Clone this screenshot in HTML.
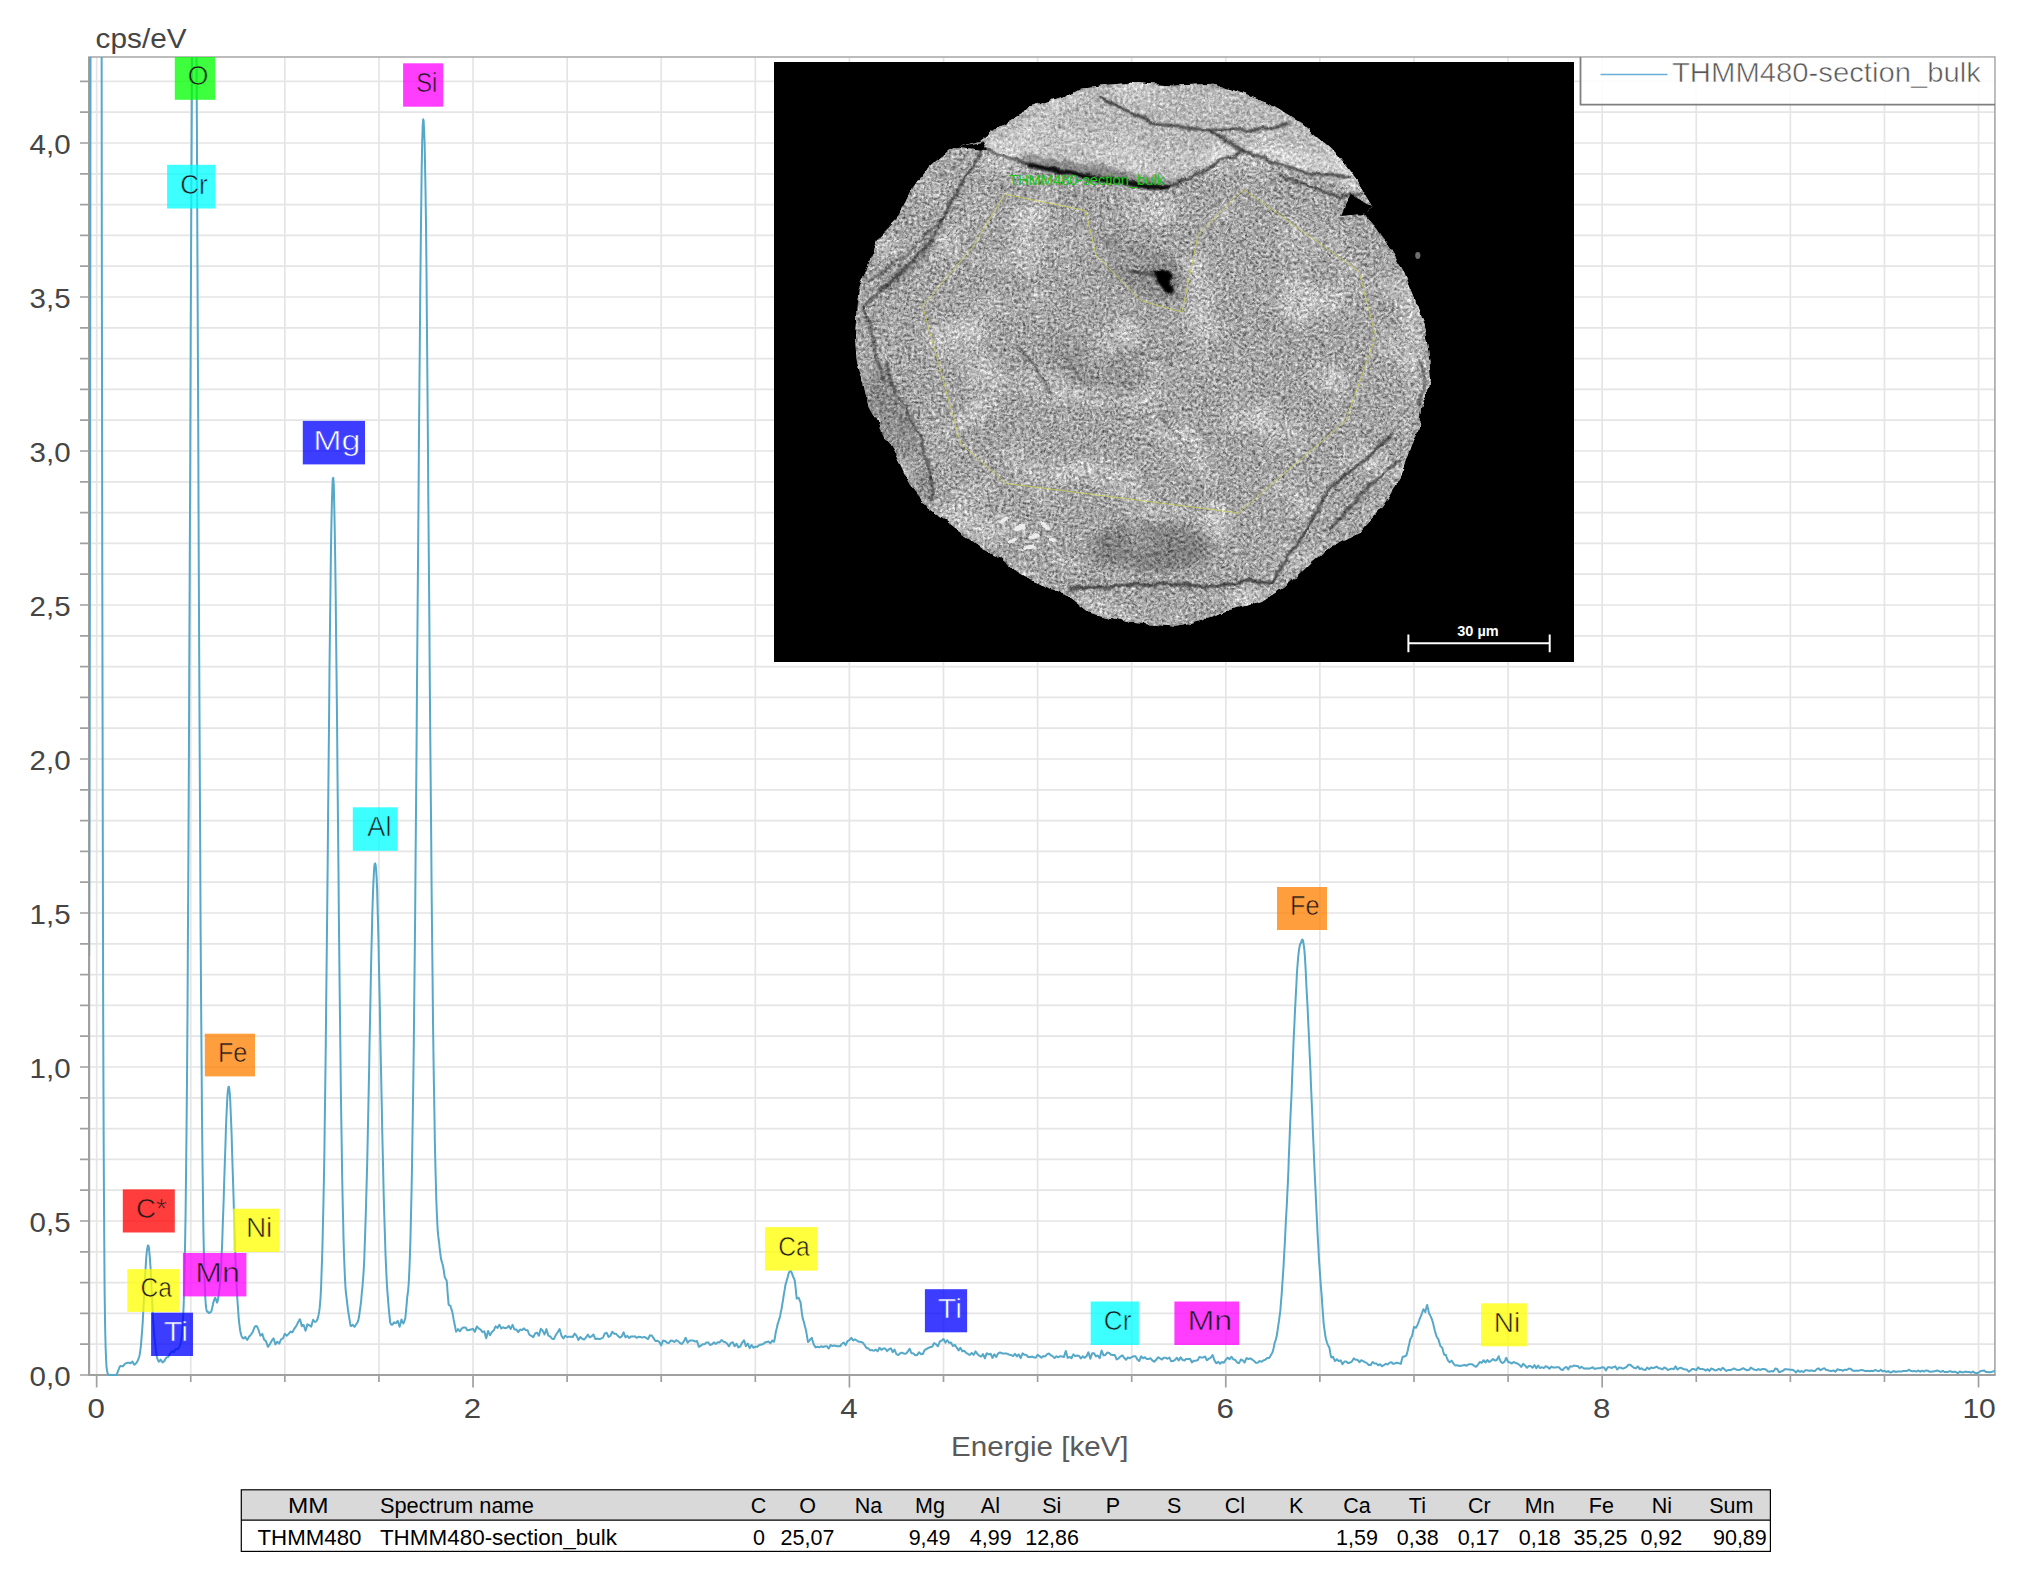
<!DOCTYPE html>
<html lang="de"><head><meta charset="utf-8"><title>EDS Spektrum THMM480-section_bulk</title>
<style>html,body{margin:0;padding:0;background:#fff;}body{width:2026px;height:1580px;overflow:hidden;}svg{display:block;}text{font-family:"Liberation Sans", sans-serif;}</style></head><body>
<svg width="2026" height="1580" viewBox="0 0 2026 1580">
<rect x="0" y="0" width="2026" height="1580" fill="#ffffff"/>
<defs>
<clipPath id="plotclip"><rect x="89.1" y="57.0" width="1905.8" height="1319.0"/></clipPath>
</defs>
<path d="M89.1 1344.20H1994.9M89.1 1313.40H1994.9M89.1 1282.60H1994.9M89.1 1251.80H1994.9M89.1 1221.00H1994.9M89.1 1190.20H1994.9M89.1 1159.40H1994.9M89.1 1128.60H1994.9M89.1 1097.80H1994.9M89.1 1067.00H1994.9M89.1 1036.20H1994.9M89.1 1005.40H1994.9M89.1 974.60H1994.9M89.1 943.80H1994.9M89.1 913.00H1994.9M89.1 882.20H1994.9M89.1 851.40H1994.9M89.1 820.60H1994.9M89.1 789.80H1994.9M89.1 759.00H1994.9M89.1 728.20H1994.9M89.1 697.40H1994.9M89.1 666.60H1994.9M89.1 635.80H1994.9M89.1 605.00H1994.9M89.1 574.20H1994.9M89.1 543.40H1994.9M89.1 512.60H1994.9M89.1 481.80H1994.9M89.1 451.00H1994.9M89.1 420.20H1994.9M89.1 389.40H1994.9M89.1 358.60H1994.9M89.1 327.80H1994.9M89.1 297.00H1994.9M89.1 266.20H1994.9M89.1 235.40H1994.9M89.1 204.60H1994.9M89.1 173.80H1994.9M89.1 143.00H1994.9M89.1 112.20H1994.9M89.1 81.40H1994.9M96.65 57.0V1375.0M190.75 57.0V1375.0M284.84 57.0V1375.0M378.93 57.0V1375.0M473.03 57.0V1375.0M567.12 57.0V1375.0M661.22 57.0V1375.0M755.31 57.0V1375.0M849.41 57.0V1375.0M943.50 57.0V1375.0M1037.60 57.0V1375.0M1131.70 57.0V1375.0M1225.79 57.0V1375.0M1319.88 57.0V1375.0M1413.98 57.0V1375.0M1508.08 57.0V1375.0M1602.17 57.0V1375.0M1696.27 57.0V1375.0M1790.36 57.0V1375.0M1884.46 57.0V1375.0M1978.55 57.0V1375.0" stroke="#e5e5e5" stroke-width="1.7" fill="none"/>
<path d="M88.1 57.0H1994.9V1375.0" stroke="#a6a6a6" stroke-width="1.6" fill="none"/>
<path d="M89.1 57.0V1375.0H1995.7" stroke="#a0a0a0" stroke-width="2.2" fill="none"/>
<path d="M80.0 1375.00H89.1M80.0 1344.20H89.1M80.0 1313.40H89.1M80.0 1282.60H89.1M80.0 1251.80H89.1M80.0 1221.00H89.1M80.0 1190.20H89.1M80.0 1159.40H89.1M80.0 1128.60H89.1M80.0 1097.80H89.1M80.0 1067.00H89.1M80.0 1036.20H89.1M80.0 1005.40H89.1M80.0 974.60H89.1M80.0 943.80H89.1M80.0 913.00H89.1M80.0 882.20H89.1M80.0 851.40H89.1M80.0 820.60H89.1M80.0 789.80H89.1M80.0 759.00H89.1M80.0 728.20H89.1M80.0 697.40H89.1M80.0 666.60H89.1M80.0 635.80H89.1M80.0 605.00H89.1M80.0 574.20H89.1M80.0 543.40H89.1M80.0 512.60H89.1M80.0 481.80H89.1M80.0 451.00H89.1M80.0 420.20H89.1M80.0 389.40H89.1M80.0 358.60H89.1M80.0 327.80H89.1M80.0 297.00H89.1M80.0 266.20H89.1M80.0 235.40H89.1M80.0 204.60H89.1M80.0 173.80H89.1M80.0 143.00H89.1M80.0 112.20H89.1M80.0 81.40H89.1M96.65 1375.0v12.5M190.75 1375.0v7.0M284.84 1375.0v7.0M378.93 1375.0v7.0M473.03 1375.0v12.5M567.12 1375.0v7.0M661.22 1375.0v7.0M755.31 1375.0v7.0M849.41 1375.0v12.5M943.50 1375.0v7.0M1037.60 1375.0v7.0M1131.70 1375.0v7.0M1225.79 1375.0v12.5M1319.88 1375.0v7.0M1413.98 1375.0v7.0M1508.08 1375.0v7.0M1602.17 1375.0v12.5M1696.27 1375.0v7.0M1790.36 1375.0v7.0M1884.46 1375.0v7.0M1978.55 1375.0v12.5" stroke="#a0a0a0" stroke-width="1.7" fill="none"/>
<g fill="#454545" font-size="28.5px">
<text x="70.6" y="1385.6" text-anchor="end" textLength="41" lengthAdjust="spacingAndGlyphs">0,0</text>
<text x="70.6" y="1231.6" text-anchor="end" textLength="41" lengthAdjust="spacingAndGlyphs">0,5</text>
<text x="70.6" y="1077.6" text-anchor="end" textLength="41" lengthAdjust="spacingAndGlyphs">1,0</text>
<text x="70.6" y="923.6" text-anchor="end" textLength="41" lengthAdjust="spacingAndGlyphs">1,5</text>
<text x="70.6" y="769.6" text-anchor="end" textLength="41" lengthAdjust="spacingAndGlyphs">2,0</text>
<text x="70.6" y="615.6" text-anchor="end" textLength="41" lengthAdjust="spacingAndGlyphs">2,5</text>
<text x="70.6" y="461.6" text-anchor="end" textLength="41" lengthAdjust="spacingAndGlyphs">3,0</text>
<text x="70.6" y="307.6" text-anchor="end" textLength="41" lengthAdjust="spacingAndGlyphs">3,5</text>
<text x="70.6" y="153.6" text-anchor="end" textLength="41" lengthAdjust="spacingAndGlyphs">4,0</text>
<text x="96.2" y="1417.6" text-anchor="middle" textLength="17.4" lengthAdjust="spacingAndGlyphs">0</text>
<text x="472.5" y="1417.6" text-anchor="middle" textLength="17.4" lengthAdjust="spacingAndGlyphs">2</text>
<text x="848.9" y="1417.6" text-anchor="middle" textLength="17.4" lengthAdjust="spacingAndGlyphs">4</text>
<text x="1225.3" y="1417.6" text-anchor="middle" textLength="17.4" lengthAdjust="spacingAndGlyphs">6</text>
<text x="1601.7" y="1417.6" text-anchor="middle" textLength="17.4" lengthAdjust="spacingAndGlyphs">8</text>
<text x="1979.1" y="1417.6" text-anchor="middle" textLength="33.4" lengthAdjust="spacingAndGlyphs">10</text>
<text x="95.6" y="47.6" textLength="91" lengthAdjust="spacingAndGlyphs">cps/eV</text>
<text x="1039.8" y="1455.6" text-anchor="middle" textLength="177.5" lengthAdjust="spacingAndGlyphs" fill="#5a5a5a">Energie [keV]</text>
</g>
<g clip-path="url(#plotclip)"><path d="M89.1 955.5 L89.6 744.1 L90.1 452.9 L90.5 65.3 L91.0 -400.0 L91.5 -400.0 L91.9 -400.0 L92.4 -400.0 L92.9 -400.0 L93.4 -400.0 L93.8 -400.0 L94.3 -400.0 L94.8 -400.0 L95.2 -400.0 L95.7 -400.0 L96.2 -400.0 L96.7 -400.0 L97.1 -400.0 L97.6 -400.0 L98.1 -400.0 L98.5 -400.0 L99.0 -400.0 L99.5 -400.0 L99.9 -400.0 L100.4 -400.0 L100.9 -400.0 L101.4 -219.7 L101.8 232.9 L102.3 580.1 L102.8 837.3 L103.2 1021.5 L103.7 1149.1 L104.2 1234.8 L104.6 1290.4 L105.1 1325.4 L105.6 1346.7 L106.1 1359.3 L106.5 1366.6 L107.0 1370.6 L107.5 1372.8 L107.9 1373.9 L108.4 1374.5 L108.9 1374.8 L109.4 1374.9 L109.8 1375.0 L110.3 1375.0 L110.8 1375.0 L111.2 1375.0 L111.7 1375.0 L112.2 1375.0 L112.6 1375.0 L113.1 1375.0 L113.6 1375.0 L114.1 1375.0 L114.5 1375.0 L115.0 1375.0 L115.5 1375.0 L115.9 1375.0 L116.4 1375.0 L116.9 1373.8 L117.4 1372.7 L117.8 1371.5 L118.3 1370.3 L118.8 1369.1 L119.2 1367.9 L119.7 1366.9 L120.2 1366.0 L120.6 1366.1 L121.1 1366.1 L121.6 1366.2 L122.1 1366.2 L122.5 1366.3 L123.0 1366.3 L123.5 1365.7 L123.9 1365.1 L124.4 1364.5 L124.9 1363.9 L125.3 1363.7 L125.8 1363.4 L126.3 1363.1 L126.8 1362.9 L127.2 1362.8 L127.7 1362.8 L128.2 1362.7 L128.6 1362.7 L129.1 1362.8 L129.6 1363.0 L130.1 1363.1 L130.5 1363.2 L131.0 1362.8 L131.5 1362.4 L131.9 1362.0 L132.4 1361.6 L132.9 1362.4 L133.3 1363.2 L133.8 1363.9 L134.3 1364.7 L134.8 1364.4 L135.2 1364.0 L135.7 1363.6 L136.2 1363.1 L136.6 1362.5 L137.1 1361.8 L137.6 1360.9 L138.1 1359.7 L138.5 1358.7 L139.0 1357.3 L139.5 1355.5 L139.9 1353.2 L140.4 1349.8 L140.9 1345.6 L141.3 1340.7 L141.8 1334.8 L142.3 1328.2 L142.8 1320.8 L143.2 1312.5 L143.7 1303.5 L144.2 1294.7 L144.6 1285.7 L145.1 1276.8 L145.6 1268.4 L146.0 1261.1 L146.5 1254.9 L147.0 1250.2 L147.5 1247.3 L147.9 1245.4 L148.4 1245.6 L148.9 1247.7 L149.3 1251.7 L149.8 1257.2 L150.3 1264.1 L150.8 1272.1 L151.2 1280.7 L151.7 1290.8 L152.2 1300.8 L152.6 1310.6 L153.1 1319.8 L153.6 1326.7 L154.0 1332.7 L154.5 1337.8 L155.0 1342.0 L155.5 1346.7 L155.9 1350.7 L156.4 1353.9 L156.9 1356.5 L157.3 1358.3 L157.8 1359.7 L158.3 1360.8 L158.8 1361.6 L159.2 1361.3 L159.7 1360.8 L160.2 1360.3 L160.6 1359.6 L161.1 1360.4 L161.6 1361.1 L162.0 1361.8 L162.5 1362.4 L163.0 1362.1 L163.5 1361.7 L163.9 1361.3 L164.4 1360.9 L164.9 1360.1 L165.3 1359.2 L165.8 1358.4 L166.3 1357.6 L166.8 1357.4 L167.2 1357.3 L167.7 1357.1 L168.2 1356.9 L168.6 1356.2 L169.1 1355.4 L169.6 1354.6 L170.0 1353.8 L170.5 1353.2 L171.0 1352.5 L171.5 1351.9 L171.9 1351.2 L172.4 1351.4 L172.9 1351.7 L173.3 1351.9 L173.8 1352.1 L174.3 1351.3 L174.7 1350.5 L175.2 1349.8 L175.7 1349.0 L176.2 1349.1 L176.6 1349.1 L177.1 1349.2 L177.6 1349.2 L178.0 1348.8 L178.5 1348.3 L179.0 1347.7 L179.5 1347.0 L179.9 1345.8 L180.4 1344.3 L180.9 1342.3 L181.3 1339.7 L181.8 1336.1 L182.3 1331.3 L182.7 1324.8 L183.2 1316.1 L183.7 1303.8 L184.2 1288.0 L184.6 1267.7 L185.1 1242.2 L185.6 1213.3 L186.0 1177.2 L186.5 1133.0 L187.0 1079.8 L187.5 1014.2 L187.9 939.0 L188.4 854.4 L188.9 761.0 L189.3 660.7 L189.8 554.8 L190.3 445.6 L190.7 336.0 L191.2 228.8 L191.7 128.1 L192.2 37.3 L192.6 -40.1 L193.1 -100.6 L193.6 -142.3 L194.0 -163.3 L194.5 -162.9 L195.0 -142.0 L195.4 -100.6 L195.9 -40.6 L196.4 35.5 L196.9 126.6 L197.3 227.2 L197.8 333.8 L198.3 442.8 L198.7 551.7 L199.2 657.0 L199.7 756.4 L200.2 848.2 L200.6 929.7 L201.1 1001.7 L201.6 1064.1 L202.0 1117.2 L202.5 1162.6 L203.0 1200.0 L203.4 1230.2 L203.9 1254.3 L204.4 1272.7 L204.9 1286.7 L205.3 1297.3 L205.8 1305.2 L206.3 1308.9 L206.7 1310.9 L207.2 1311.7 L207.7 1311.5 L208.2 1312.5 L208.6 1313.0 L209.1 1313.0 L209.6 1312.6 L210.0 1312.6 L210.5 1312.4 L211.0 1311.8 L211.4 1311.0 L211.9 1309.1 L212.4 1307.0 L212.9 1304.8 L213.3 1302.7 L213.8 1301.1 L214.3 1299.7 L214.7 1298.6 L215.2 1297.8 L215.7 1298.9 L216.2 1300.2 L216.6 1301.5 L217.1 1302.7 L217.6 1301.2 L218.0 1299.1 L218.5 1296.3 L219.0 1292.6 L219.4 1289.3 L219.9 1284.7 L220.4 1278.7 L220.9 1271.4 L221.3 1262.2 L221.8 1251.6 L222.3 1239.6 L222.7 1226.5 L223.2 1213.1 L223.7 1198.9 L224.1 1184.3 L224.6 1169.5 L225.1 1154.5 L225.6 1140.1 L226.0 1126.8 L226.5 1114.9 L227.0 1104.5 L227.4 1096.2 L227.9 1090.3 L228.4 1087.1 L228.9 1086.7 L229.3 1089.2 L229.8 1094.2 L230.3 1101.8 L230.7 1111.8 L231.2 1123.8 L231.7 1137.4 L232.1 1152.1 L232.6 1167.4 L233.1 1183.1 L233.6 1198.8 L234.0 1214.3 L234.5 1229.8 L235.0 1244.5 L235.4 1258.1 L235.9 1270.6 L236.4 1281.2 L236.9 1290.5 L237.3 1298.5 L237.8 1305.5 L238.3 1312.3 L238.7 1318.1 L239.2 1323.0 L239.7 1327.2 L240.1 1330.2 L240.6 1332.6 L241.1 1334.5 L241.6 1336.1 L242.0 1337.0 L242.5 1337.7 L243.0 1338.2 L243.4 1338.5 L243.9 1338.3 L244.4 1337.9 L244.8 1337.5 L245.3 1336.9 L245.8 1337.8 L246.3 1338.6 L246.7 1339.3 L247.2 1339.9 L247.7 1339.2 L248.1 1338.4 L248.6 1337.5 L249.1 1336.5 L249.6 1336.1 L250.0 1335.7 L250.5 1335.2 L251.0 1334.5 L251.4 1333.9 L251.9 1333.2 L252.4 1332.5 L252.8 1331.8 L253.3 1330.4 L253.8 1329.1 L254.3 1327.9 L254.7 1327.0 L255.2 1326.4 L255.7 1326.1 L256.1 1325.9 L256.6 1326.1 L257.1 1326.7 L257.6 1327.6 L258.0 1328.6 L258.5 1329.7 L259.0 1331.2 L259.4 1332.7 L259.9 1334.2 L260.4 1335.6 L260.8 1335.3 L261.3 1334.9 L261.8 1334.4 L262.3 1333.8 L262.7 1335.4 L263.2 1336.8 L263.7 1338.2 L264.1 1339.5 L264.6 1340.1 L265.1 1340.5 L265.6 1340.9 L266.0 1341.3 L266.5 1342.7 L267.0 1344.1 L267.4 1345.5 L267.9 1346.8 L268.4 1346.2 L268.8 1345.6 L269.3 1345.0 L269.8 1344.4 L270.3 1343.5 L270.7 1342.6 L271.2 1341.7 L271.7 1340.8 L272.1 1340.2 L272.6 1339.5 L273.1 1338.9 L273.5 1338.3 L274.0 1339.8 L274.5 1341.4 L275.0 1342.9 L275.4 1344.4 L275.9 1343.8 L276.4 1343.1 L276.8 1342.4 L277.3 1341.7 L277.8 1342.1 L278.3 1342.6 L278.7 1343.1 L279.2 1343.6 L279.7 1342.5 L280.1 1341.4 L280.6 1340.4 L281.1 1339.3 L281.5 1339.1 L282.0 1338.9 L282.5 1338.6 L283.0 1338.4 L283.4 1337.3 L283.9 1336.2 L284.4 1335.0 L284.8 1333.9 L285.3 1334.4 L285.8 1334.8 L286.3 1335.3 L286.7 1335.8 L287.2 1335.3 L287.7 1334.8 L288.1 1334.4 L288.6 1333.9 L289.1 1333.3 L289.5 1332.7 L290.0 1332.2 L290.5 1331.6 L291.0 1331.8 L291.4 1332.0 L291.9 1332.2 L292.4 1332.3 L292.8 1331.5 L293.3 1330.6 L293.8 1329.6 L294.2 1328.7 L294.7 1328.1 L295.2 1327.5 L295.7 1326.8 L296.1 1326.0 L296.6 1325.3 L297.1 1324.4 L297.5 1323.4 L298.0 1322.4 L298.5 1321.5 L299.0 1320.7 L299.4 1319.9 L299.9 1319.2 L300.4 1320.6 L300.8 1322.2 L301.3 1324.1 L301.8 1326.2 L302.2 1325.6 L302.7 1325.2 L303.2 1325.0 L303.7 1324.9 L304.1 1326.4 L304.6 1327.9 L305.1 1329.3 L305.5 1330.7 L306.0 1329.3 L306.5 1327.7 L307.0 1326.1 L307.4 1324.3 L307.9 1324.7 L308.4 1324.9 L308.8 1325.1 L309.3 1325.2 L309.8 1325.6 L310.2 1325.9 L310.7 1326.3 L311.2 1326.6 L311.7 1324.9 L312.1 1323.2 L312.6 1321.5 L313.1 1319.8 L313.5 1320.4 L314.0 1321.0 L314.5 1321.5 L315.0 1321.9 L315.4 1321.8 L315.9 1321.6 L316.4 1321.1 L316.8 1320.5 L317.3 1319.6 L317.8 1318.4 L318.2 1316.6 L318.7 1314.2 L319.2 1311.4 L319.7 1307.7 L320.1 1302.8 L320.6 1296.5 L321.1 1286.6 L321.5 1274.8 L322.0 1260.8 L322.5 1244.2 L322.9 1225.9 L323.4 1204.5 L323.9 1180.0 L324.4 1152.0 L324.8 1119.2 L325.3 1082.9 L325.8 1043.2 L326.2 1000.4 L326.7 956.4 L327.2 910.1 L327.7 862.1 L328.1 813.1 L328.6 764.1 L329.1 715.9 L329.5 669.6 L330.0 626.1 L330.5 587.0 L330.9 552.8 L331.4 524.4 L331.9 502.6 L332.4 486.7 L332.8 478.4 L333.3 477.8 L333.8 485.1 L334.2 502.9 L334.7 527.8 L335.2 559.3 L335.7 596.5 L336.1 636.2 L336.6 679.8 L337.1 726.3 L337.5 774.6 L338.0 823.6 L338.5 872.4 L338.9 920.2 L339.4 966.3 L339.9 1009.4 L340.4 1049.6 L340.8 1086.7 L341.3 1120.4 L341.8 1151.3 L342.2 1178.7 L342.7 1202.7 L343.2 1223.5 L343.6 1241.6 L344.1 1257.0 L344.6 1269.9 L345.1 1280.6 L345.5 1287.8 L346.0 1293.3 L346.5 1297.4 L346.9 1300.4 L347.4 1305.1 L347.9 1309.0 L348.4 1312.3 L348.8 1315.0 L349.3 1318.2 L349.8 1321.1 L350.2 1323.7 L350.7 1326.1 L351.2 1325.9 L351.6 1325.6 L352.1 1325.2 L352.6 1324.8 L353.1 1325.3 L353.5 1325.9 L354.0 1326.4 L354.5 1326.9 L354.9 1326.2 L355.4 1325.5 L355.9 1324.8 L356.4 1324.0 L356.8 1323.4 L357.3 1322.6 L357.8 1321.7 L358.2 1320.6 L358.7 1318.2 L359.2 1315.5 L359.6 1312.4 L360.1 1308.9 L360.6 1305.4 L361.1 1301.3 L361.5 1296.5 L362.0 1290.9 L362.5 1286.6 L362.9 1281.2 L363.4 1274.7 L363.9 1266.9 L364.4 1255.8 L364.8 1243.4 L365.3 1229.4 L365.8 1213.9 L366.2 1198.5 L366.7 1181.5 L367.2 1163.1 L367.6 1143.4 L368.1 1120.1 L368.6 1095.8 L369.1 1070.8 L369.5 1045.4 L370.0 1021.1 L370.5 997.1 L370.9 973.8 L371.4 951.6 L371.9 931.8 L372.3 913.9 L372.8 898.3 L373.3 885.4 L373.8 875.0 L374.2 867.8 L374.7 863.9 L375.2 863.4 L375.6 864.8 L376.1 869.5 L376.6 877.6 L377.1 888.7 L377.5 904.2 L378.0 922.1 L378.5 942.2 L378.9 964.1 L379.4 986.9 L379.9 1010.6 L380.3 1034.9 L380.8 1059.4 L381.3 1083.3 L381.8 1106.7 L382.2 1129.4 L382.7 1150.9 L383.2 1171.8 L383.6 1191.3 L384.1 1209.3 L384.6 1225.8 L385.1 1240.5 L385.5 1253.8 L386.0 1265.6 L386.5 1276.0 L386.9 1284.4 L387.4 1291.6 L387.9 1297.7 L388.3 1302.8 L388.8 1308.8 L389.3 1314.0 L389.8 1318.6 L390.2 1322.6 L390.7 1323.7 L391.2 1324.4 L391.6 1324.8 L392.1 1324.8 L392.6 1324.5 L393.0 1323.9 L393.5 1323.2 L394.0 1322.4 L394.5 1322.7 L394.9 1322.9 L395.4 1323.0 L395.9 1323.1 L396.3 1322.6 L396.8 1322.0 L397.3 1321.4 L397.8 1320.9 L398.2 1322.4 L398.7 1323.9 L399.2 1325.4 L399.6 1326.8 L400.1 1325.0 L400.6 1323.2 L401.0 1321.3 L401.5 1319.4 L402.0 1320.6 L402.5 1321.6 L402.9 1322.6 L403.4 1323.4 L403.9 1322.4 L404.3 1321.2 L404.8 1319.8 L405.3 1317.9 L405.8 1313.7 L406.2 1309.0 L406.7 1303.6 L407.2 1297.4 L407.6 1294.5 L408.1 1290.4 L408.6 1285.0 L409.0 1278.0 L409.5 1266.6 L410.0 1253.1 L410.5 1237.3 L410.9 1219.0 L411.4 1197.7 L411.9 1173.4 L412.3 1145.7 L412.8 1114.6 L413.3 1081.2 L413.8 1044.2 L414.2 1003.4 L414.7 959.0 L415.2 909.2 L415.6 856.2 L416.1 800.3 L416.6 741.9 L417.0 683.2 L417.5 623.2 L418.0 562.8 L418.5 502.8 L418.9 444.4 L419.4 388.3 L419.9 335.5 L420.3 286.8 L420.8 240.8 L421.3 200.7 L421.7 167.3 L422.2 141.2 L422.7 126.1 L423.2 119.2 L423.6 120.7 L424.1 130.5 L424.6 142.6 L425.0 162.6 L425.5 189.8 L426.0 223.8 L426.5 271.1 L426.9 323.5 L427.4 380.0 L427.9 439.8 L428.3 496.5 L428.8 554.5 L429.3 612.8 L429.7 670.5 L430.2 728.6 L430.7 784.6 L431.2 838.0 L431.6 888.3 L432.1 936.3 L432.6 980.5 L433.0 1020.9 L433.5 1057.4 L434.0 1090.1 L434.5 1118.9 L434.9 1144.2 L435.4 1166.1 L435.9 1184.3 L436.3 1199.6 L436.8 1212.3 L437.3 1222.8 L437.7 1230.1 L438.2 1235.7 L438.7 1240.0 L439.2 1243.2 L439.6 1247.9 L440.1 1251.9 L440.6 1255.6 L441.0 1258.9 L441.5 1260.6 L442.0 1262.2 L442.4 1263.8 L442.9 1265.6 L443.4 1268.3 L443.9 1271.1 L444.3 1274.1 L444.8 1277.3 L445.3 1278.0 L445.7 1278.9 L446.2 1279.8 L446.7 1280.7 L447.2 1286.7 L447.6 1292.7 L448.1 1298.6 L448.6 1304.4 L449.0 1305.0 L449.5 1305.4 L450.0 1305.6 L450.4 1305.7 L450.9 1307.5 L451.4 1309.1 L451.9 1310.6 L452.3 1311.8 L452.8 1314.7 L453.3 1317.4 L453.7 1319.9 L454.2 1322.3 L454.7 1324.8 L455.2 1327.2 L455.6 1329.5 L456.1 1331.7 L456.6 1331.1 L457.0 1330.5 L457.5 1329.8 L458.0 1329.0 L458.4 1329.6 L458.9 1330.2 L459.4 1330.8 L459.9 1331.3 L460.3 1330.6 L460.8 1329.9 L461.3 1329.2 L461.7 1328.5 L462.2 1328.2 L462.7 1328.0 L463.2 1327.7 L463.6 1327.4 L464.1 1327.4 L464.6 1327.4 L465.0 1327.4 L465.5 1327.4 L466.0 1328.1 L466.4 1328.9 L466.9 1329.6 L467.4 1330.3 L467.9 1330.2 L468.3 1330.1 L468.8 1330.1 L469.3 1330.0 L469.7 1329.8 L470.2 1329.7 L470.7 1329.5 L471.1 1329.4 L471.6 1329.3 L472.1 1329.2 L472.6 1329.1 L473.0 1328.9 L473.5 1329.7 L474.0 1330.4 L474.4 1331.1 L474.9 1331.8 L475.4 1330.5 L475.9 1329.2 L476.3 1327.8 L476.8 1326.5 L477.3 1327.0 L477.7 1327.5 L478.2 1327.9 L478.7 1328.4 L479.1 1328.7 L479.6 1329.0 L480.1 1329.3 L480.6 1329.6 L481.0 1330.2 L481.5 1330.8 L482.0 1331.4 L482.4 1332.1 L482.9 1331.9 L483.4 1331.7 L483.9 1331.6 L484.3 1331.4 L484.8 1333.1 L485.3 1334.9 L485.7 1336.6 L486.2 1338.3 L486.7 1336.5 L487.1 1334.6 L487.6 1332.8 L488.1 1330.9 L488.6 1332.0 L489.0 1333.1 L489.5 1334.2 L490.0 1335.3 L490.4 1334.5 L490.9 1333.7 L491.4 1332.9 L491.8 1332.0 L492.3 1331.6 L492.8 1331.2 L493.3 1330.8 L493.7 1330.5 L494.2 1329.4 L494.7 1328.4 L495.1 1327.4 L495.6 1326.4 L496.1 1326.8 L496.6 1327.2 L497.0 1327.5 L497.5 1327.9 L498.0 1327.1 L498.4 1326.3 L498.9 1325.5 L499.4 1324.7 L499.8 1325.7 L500.3 1326.6 L500.8 1327.5 L501.3 1328.4 L501.7 1328.1 L502.2 1327.9 L502.7 1327.6 L503.1 1327.3 L503.6 1327.5 L504.1 1327.8 L504.6 1328.0 L505.0 1328.2 L505.5 1328.1 L506.0 1328.0 L506.4 1327.9 L506.9 1327.7 L507.4 1327.3 L507.8 1326.8 L508.3 1326.4 L508.8 1325.9 L509.3 1326.7 L509.7 1327.4 L510.2 1328.1 L510.7 1328.9 L511.1 1327.9 L511.6 1326.9 L512.1 1325.9 L512.5 1324.9 L513.0 1326.0 L513.5 1327.2 L514.0 1328.3 L514.4 1329.4 L514.9 1329.4 L515.4 1329.4 L515.8 1329.4 L516.3 1329.4 L516.8 1330.1 L517.3 1330.8 L517.7 1331.5 L518.2 1332.2 L518.7 1331.5 L519.1 1330.9 L519.6 1330.2 L520.1 1329.5 L520.5 1329.6 L521.0 1329.8 L521.5 1330.0 L522.0 1330.1 L522.4 1329.7 L522.9 1329.3 L523.4 1328.8 L523.8 1328.4 L524.3 1328.8 L524.8 1329.3 L525.3 1329.7 L525.7 1330.1 L526.2 1330.2 L526.7 1330.2 L527.1 1330.2 L527.6 1330.3 L528.1 1331.5 L528.5 1332.6 L529.0 1333.8 L529.5 1334.9 L530.0 1335.1 L530.4 1335.4 L530.9 1335.6 L531.4 1335.8 L531.8 1336.1 L532.3 1336.5 L532.8 1336.9 L533.3 1337.2 L533.7 1336.3 L534.2 1335.3 L534.7 1334.4 L535.1 1333.4 L535.6 1333.2 L536.1 1333.1 L536.5 1332.9 L537.0 1332.7 L537.5 1333.4 L538.0 1334.2 L538.4 1334.9 L538.9 1335.7 L539.4 1333.9 L539.8 1332.2 L540.3 1330.5 L540.8 1328.8 L541.2 1329.3 L541.7 1329.8 L542.2 1330.3 L542.7 1330.8 L543.1 1331.7 L543.6 1332.6 L544.1 1333.6 L544.5 1334.5 L545.0 1333.2 L545.5 1331.8 L546.0 1330.5 L546.4 1329.1 L546.9 1330.7 L547.4 1332.3 L547.8 1333.9 L548.3 1335.5 L548.8 1335.7 L549.2 1336.0 L549.7 1336.3 L550.2 1336.5 L550.7 1337.0 L551.1 1337.6 L551.6 1338.1 L552.1 1338.7 L552.5 1338.8 L553.0 1338.9 L553.5 1338.9 L554.0 1339.0 L554.4 1338.0 L554.9 1336.9 L555.4 1335.9 L555.8 1334.8 L556.3 1334.2 L556.8 1333.5 L557.2 1332.9 L557.7 1332.3 L558.2 1331.4 L558.7 1330.6 L559.1 1329.8 L559.6 1329.0 L560.1 1330.7 L560.5 1332.3 L561.0 1334.0 L561.5 1335.7 L561.9 1336.4 L562.4 1337.0 L562.9 1337.7 L563.4 1338.4 L563.8 1337.7 L564.3 1337.0 L564.8 1336.3 L565.2 1335.7 L565.7 1336.0 L566.2 1336.3 L566.7 1336.7 L567.1 1337.0 L567.6 1336.9 L568.1 1336.9 L568.5 1336.8 L569.0 1336.7 L569.5 1336.7 L569.9 1336.7 L570.4 1336.7 L570.9 1336.7 L571.4 1336.8 L571.8 1336.8 L572.3 1336.9 L572.8 1337.0 L573.2 1336.1 L573.7 1335.2 L574.2 1334.4 L574.7 1333.5 L575.1 1334.1 L575.6 1334.7 L576.1 1335.3 L576.5 1335.9 L577.0 1336.9 L577.5 1337.9 L577.9 1338.9 L578.4 1340.0 L578.9 1339.2 L579.4 1338.5 L579.8 1337.7 L580.3 1337.0 L580.8 1337.4 L581.2 1337.8 L581.7 1338.3 L582.2 1338.7 L582.7 1338.9 L583.1 1339.1 L583.6 1339.4 L584.1 1339.6 L584.5 1339.1 L585.0 1338.6 L585.5 1338.0 L585.9 1337.5 L586.4 1336.8 L586.9 1336.1 L587.4 1335.3 L587.8 1334.6 L588.3 1335.3 L588.8 1336.0 L589.2 1336.6 L589.7 1337.3 L590.2 1337.1 L590.6 1336.8 L591.1 1336.6 L591.6 1336.3 L592.1 1335.9 L592.5 1335.4 L593.0 1334.9 L593.5 1334.4 L593.9 1335.6 L594.4 1336.8 L594.9 1338.0 L595.4 1339.1 L595.8 1339.0 L596.3 1338.9 L596.8 1338.7 L597.2 1338.6 L597.7 1338.7 L598.2 1338.9 L598.6 1339.0 L599.1 1339.1 L599.6 1339.0 L600.1 1338.9 L600.5 1338.8 L601.0 1338.6 L601.5 1338.4 L601.9 1338.2 L602.4 1337.9 L602.9 1337.7 L603.4 1336.6 L603.8 1335.6 L604.3 1334.5 L604.8 1333.5 L605.2 1333.3 L605.7 1333.1 L606.2 1332.9 L606.6 1332.7 L607.1 1333.7 L607.6 1334.8 L608.1 1335.8 L608.5 1336.9 L609.0 1336.6 L609.5 1336.3 L609.9 1336.1 L610.4 1335.8 L610.9 1334.8 L611.3 1333.8 L611.8 1332.8 L612.3 1331.8 L612.8 1332.3 L613.2 1332.8 L613.7 1333.3 L614.2 1333.8 L614.6 1333.8 L615.1 1333.8 L615.6 1333.8 L616.1 1333.8 L616.5 1334.4 L617.0 1334.9 L617.5 1335.4 L617.9 1335.9 L618.4 1336.3 L618.9 1336.7 L619.3 1337.2 L619.8 1337.6 L620.3 1337.3 L620.8 1337.0 L621.2 1336.8 L621.7 1336.5 L622.2 1335.4 L622.6 1334.4 L623.1 1333.4 L623.6 1332.4 L624.1 1333.6 L624.5 1334.8 L625.0 1336.1 L625.5 1337.3 L625.9 1337.0 L626.4 1336.6 L626.9 1336.2 L627.3 1335.8 L627.8 1336.4 L628.3 1336.9 L628.8 1337.5 L629.2 1338.0 L629.7 1337.6 L630.2 1337.2 L630.6 1336.8 L631.1 1336.4 L631.6 1336.4 L632.1 1336.5 L632.5 1336.5 L633.0 1336.5 L633.5 1336.5 L633.9 1336.4 L634.4 1336.4 L634.9 1336.3 L635.3 1336.7 L635.8 1337.1 L636.3 1337.5 L636.8 1337.8 L637.2 1337.6 L637.7 1337.3 L638.2 1337.1 L638.6 1336.8 L639.1 1336.8 L639.6 1336.9 L640.0 1336.9 L640.5 1336.9 L641.0 1337.1 L641.5 1337.3 L641.9 1337.5 L642.4 1337.6 L642.9 1337.4 L643.3 1337.3 L643.8 1337.1 L644.3 1336.9 L644.8 1337.2 L645.2 1337.4 L645.7 1337.7 L646.2 1338.0 L646.6 1338.2 L647.1 1338.5 L647.6 1338.8 L648.0 1339.1 L648.5 1338.2 L649.0 1337.2 L649.5 1336.3 L649.9 1335.3 L650.4 1335.4 L650.9 1335.5 L651.3 1335.6 L651.8 1335.6 L652.3 1336.3 L652.8 1337.0 L653.2 1337.7 L653.7 1338.4 L654.2 1339.1 L654.6 1339.8 L655.1 1340.4 L655.6 1341.1 L656.0 1341.0 L656.5 1341.0 L657.0 1340.9 L657.5 1340.8 L657.9 1341.1 L658.4 1341.4 L658.9 1341.7 L659.3 1341.9 L659.8 1342.8 L660.3 1343.7 L660.7 1344.5 L661.2 1345.4 L661.7 1344.2 L662.2 1343.0 L662.6 1341.8 L663.1 1340.6 L663.6 1340.7 L664.0 1340.8 L664.5 1340.9 L665.0 1340.9 L665.5 1341.3 L665.9 1341.8 L666.4 1342.2 L666.9 1342.6 L667.3 1342.7 L667.8 1342.9 L668.3 1343.0 L668.7 1343.2 L669.2 1342.5 L669.7 1341.9 L670.2 1341.3 L670.6 1340.6 L671.1 1340.6 L671.6 1340.7 L672.0 1340.7 L672.5 1340.8 L673.0 1341.1 L673.5 1341.4 L673.9 1341.7 L674.4 1342.0 L674.9 1341.6 L675.3 1341.1 L675.8 1340.7 L676.3 1340.2 L676.7 1340.4 L677.2 1340.6 L677.7 1340.9 L678.2 1341.1 L678.6 1341.6 L679.1 1342.1 L679.6 1342.6 L680.0 1343.1 L680.5 1343.3 L681.0 1343.5 L681.5 1343.7 L681.9 1344.0 L682.4 1343.3 L682.9 1342.7 L683.3 1342.0 L683.8 1341.4 L684.3 1340.5 L684.7 1339.6 L685.2 1338.7 L685.7 1337.8 L686.2 1339.0 L686.6 1340.2 L687.1 1341.4 L687.6 1342.7 L688.0 1342.2 L688.5 1341.7 L689.0 1341.3 L689.4 1340.8 L689.9 1340.7 L690.4 1340.6 L690.9 1340.5 L691.3 1340.4 L691.8 1340.4 L692.3 1340.5 L692.7 1340.5 L693.2 1340.5 L693.7 1340.8 L694.2 1341.0 L694.6 1341.3 L695.1 1341.5 L695.6 1341.4 L696.0 1341.3 L696.5 1341.1 L697.0 1341.0 L697.4 1342.4 L697.9 1343.9 L698.4 1345.4 L698.9 1346.8 L699.3 1346.6 L699.8 1346.3 L700.3 1346.1 L700.7 1345.8 L701.2 1345.4 L701.7 1345.0 L702.2 1344.7 L702.6 1344.3 L703.1 1344.3 L703.6 1344.3 L704.0 1344.2 L704.5 1344.2 L705.0 1343.8 L705.4 1343.4 L705.9 1343.0 L706.4 1342.5 L706.9 1342.5 L707.3 1342.5 L707.8 1342.4 L708.3 1342.4 L708.7 1343.0 L709.2 1343.7 L709.7 1344.3 L710.1 1345.0 L710.6 1344.8 L711.1 1344.6 L711.6 1344.4 L712.0 1344.3 L712.5 1343.8 L713.0 1343.4 L713.4 1342.9 L713.9 1342.4 L714.4 1342.8 L714.9 1343.2 L715.3 1343.6 L715.8 1343.9 L716.3 1343.5 L716.7 1343.1 L717.2 1342.7 L717.7 1342.2 L718.1 1342.3 L718.6 1342.3 L719.1 1342.4 L719.6 1342.4 L720.0 1341.8 L720.5 1341.2 L721.0 1340.6 L721.4 1340.0 L721.9 1340.4 L722.4 1340.8 L722.9 1341.2 L723.3 1341.6 L723.8 1341.8 L724.3 1341.9 L724.7 1342.0 L725.2 1342.2 L725.7 1342.5 L726.1 1342.9 L726.6 1343.2 L727.1 1343.6 L727.6 1344.3 L728.0 1345.0 L728.5 1345.6 L729.0 1346.3 L729.4 1345.5 L729.9 1344.6 L730.4 1343.8 L730.9 1343.0 L731.3 1342.8 L731.8 1342.6 L732.3 1342.4 L732.7 1342.2 L733.2 1343.2 L733.7 1344.2 L734.1 1345.2 L734.6 1346.2 L735.1 1345.6 L735.6 1345.0 L736.0 1344.4 L736.5 1343.8 L737.0 1344.7 L737.4 1345.6 L737.9 1346.5 L738.4 1347.4 L738.8 1347.2 L739.3 1346.9 L739.8 1346.7 L740.3 1346.5 L740.7 1345.5 L741.2 1344.6 L741.7 1343.7 L742.1 1342.7 L742.6 1342.1 L743.1 1341.5 L743.6 1341.0 L744.0 1340.4 L744.5 1341.8 L745.0 1343.2 L745.4 1344.7 L745.9 1346.1 L746.4 1345.5 L746.8 1344.8 L747.3 1344.2 L747.8 1343.5 L748.3 1344.6 L748.7 1345.8 L749.2 1346.9 L749.7 1348.1 L750.1 1347.3 L750.6 1346.6 L751.1 1345.8 L751.6 1345.1 L752.0 1345.7 L752.5 1346.4 L753.0 1347.1 L753.4 1347.8 L753.9 1347.5 L754.4 1347.2 L754.8 1347.0 L755.3 1346.7 L755.8 1346.8 L756.3 1346.8 L756.7 1346.8 L757.2 1346.9 L757.7 1346.4 L758.1 1346.0 L758.6 1345.6 L759.1 1345.1 L759.5 1345.0 L760.0 1344.8 L760.5 1344.7 L761.0 1344.5 L761.4 1344.5 L761.9 1344.4 L762.4 1344.4 L762.8 1344.3 L763.3 1343.9 L763.8 1343.5 L764.3 1343.1 L764.7 1342.6 L765.2 1342.5 L765.7 1342.3 L766.1 1342.2 L766.6 1342.0 L767.1 1341.9 L767.5 1341.8 L768.0 1341.7 L768.5 1341.5 L769.0 1342.0 L769.4 1342.5 L769.9 1342.9 L770.4 1343.3 L770.8 1342.7 L771.3 1342.0 L771.8 1341.3 L772.3 1340.5 L772.7 1340.9 L773.2 1341.3 L773.7 1341.6 L774.1 1341.7 L774.6 1339.2 L775.1 1336.6 L775.5 1333.8 L776.0 1331.0 L776.5 1329.2 L777.0 1327.2 L777.4 1325.2 L777.9 1323.1 L778.4 1321.8 L778.8 1320.4 L779.3 1318.9 L779.8 1317.4 L780.3 1315.2 L780.7 1312.9 L781.2 1310.6 L781.7 1308.3 L782.1 1305.4 L782.6 1302.4 L783.1 1299.5 L783.5 1296.7 L784.0 1293.6 L784.5 1290.7 L785.0 1287.8 L785.4 1285.0 L785.9 1283.2 L786.4 1281.6 L786.8 1280.1 L787.3 1278.7 L787.8 1276.8 L788.2 1275.0 L788.7 1273.4 L789.2 1272.0 L789.7 1271.5 L790.1 1271.2 L790.6 1271.1 L791.1 1271.3 L791.5 1272.3 L792.0 1273.5 L792.5 1274.9 L793.0 1276.6 L793.4 1277.3 L793.9 1278.3 L794.4 1279.5 L794.8 1280.8 L795.3 1285.1 L795.8 1289.5 L796.2 1294.0 L796.7 1298.6 L797.2 1298.3 L797.7 1298.1 L798.1 1297.9 L798.6 1297.7 L799.1 1298.8 L799.5 1299.9 L800.0 1301.0 L800.5 1302.0 L801.0 1305.8 L801.4 1309.5 L801.9 1313.2 L802.4 1316.8 L802.8 1318.6 L803.3 1320.2 L803.8 1321.8 L804.2 1323.3 L804.7 1325.4 L805.2 1327.3 L805.7 1329.1 L806.1 1330.9 L806.6 1333.8 L807.1 1336.6 L807.5 1339.4 L808.0 1342.0 L808.5 1341.6 L808.9 1341.1 L809.4 1340.5 L809.9 1339.8 L810.4 1339.4 L810.8 1338.9 L811.3 1338.4 L811.8 1337.8 L812.2 1339.5 L812.7 1341.1 L813.2 1342.7 L813.7 1344.2 L814.1 1345.0 L814.6 1345.8 L815.1 1346.6 L815.5 1347.4 L816.0 1347.2 L816.5 1347.1 L816.9 1346.9 L817.4 1346.7 L817.9 1346.9 L818.4 1347.0 L818.8 1347.2 L819.3 1347.3 L819.8 1347.1 L820.2 1346.8 L820.7 1346.6 L821.2 1346.3 L821.7 1346.5 L822.1 1346.7 L822.6 1346.8 L823.1 1347.0 L823.5 1346.8 L824.0 1346.7 L824.5 1346.5 L824.9 1346.3 L825.4 1346.3 L825.9 1346.3 L826.4 1346.3 L826.8 1346.3 L827.3 1346.8 L827.8 1347.4 L828.2 1348.0 L828.7 1348.5 L829.2 1347.7 L829.7 1346.8 L830.1 1345.9 L830.6 1345.0 L831.1 1345.2 L831.5 1345.5 L832.0 1345.7 L832.5 1346.0 L832.9 1345.9 L833.4 1345.8 L833.9 1345.6 L834.4 1345.5 L834.8 1345.7 L835.3 1345.8 L835.8 1346.0 L836.2 1346.1 L836.7 1346.1 L837.2 1346.2 L837.6 1346.2 L838.1 1346.2 L838.6 1346.3 L839.1 1346.3 L839.5 1346.3 L840.0 1346.3 L840.5 1345.7 L840.9 1345.1 L841.4 1344.4 L841.9 1343.8 L842.4 1343.5 L842.8 1343.2 L843.3 1342.9 L843.8 1342.6 L844.2 1343.2 L844.7 1343.8 L845.2 1344.5 L845.6 1345.1 L846.1 1344.1 L846.6 1343.1 L847.1 1342.0 L847.5 1341.1 L848.0 1340.8 L848.5 1340.5 L848.9 1340.2 L849.4 1340.0 L849.9 1339.4 L850.4 1338.9 L850.8 1338.4 L851.3 1337.9 L851.8 1338.5 L852.2 1339.2 L852.7 1339.8 L853.2 1340.5 L853.6 1340.2 L854.1 1339.9 L854.6 1339.6 L855.1 1339.4 L855.5 1339.7 L856.0 1340.0 L856.5 1340.3 L856.9 1340.6 L857.4 1340.9 L857.9 1341.2 L858.3 1341.5 L858.8 1341.8 L859.3 1341.8 L859.8 1341.8 L860.2 1341.8 L860.7 1341.9 L861.2 1342.0 L861.6 1342.2 L862.1 1342.4 L862.6 1342.5 L863.1 1343.1 L863.5 1343.6 L864.0 1344.2 L864.5 1344.7 L864.9 1345.5 L865.4 1346.3 L865.9 1347.0 L866.3 1347.8 L866.8 1348.0 L867.3 1348.1 L867.8 1348.3 L868.2 1348.5 L868.7 1348.9 L869.2 1349.4 L869.6 1349.8 L870.1 1350.2 L870.6 1350.2 L871.1 1350.2 L871.5 1350.1 L872.0 1350.1 L872.5 1350.2 L872.9 1350.4 L873.4 1350.6 L873.9 1350.8 L874.3 1350.5 L874.8 1350.2 L875.3 1349.9 L875.8 1349.6 L876.2 1350.0 L876.7 1350.4 L877.2 1350.8 L877.6 1351.2 L878.1 1350.3 L878.6 1349.5 L879.0 1348.7 L879.5 1347.8 L880.0 1348.3 L880.5 1348.9 L880.9 1349.4 L881.4 1349.9 L881.9 1349.6 L882.3 1349.2 L882.8 1348.9 L883.3 1348.6 L883.8 1348.5 L884.2 1348.5 L884.7 1348.4 L885.2 1348.4 L885.6 1349.1 L886.1 1349.7 L886.6 1350.4 L887.0 1351.1 L887.5 1350.6 L888.0 1350.2 L888.5 1349.7 L888.9 1349.3 L889.4 1349.0 L889.9 1348.8 L890.3 1348.6 L890.8 1348.3 L891.3 1349.3 L891.8 1350.2 L892.2 1351.1 L892.7 1352.1 L893.2 1351.5 L893.6 1350.8 L894.1 1350.2 L894.6 1349.6 L895.0 1350.8 L895.5 1351.9 L896.0 1353.1 L896.5 1354.2 L896.9 1354.4 L897.4 1354.6 L897.9 1354.8 L898.3 1355.0 L898.8 1354.5 L899.3 1354.1 L899.8 1353.6 L900.2 1353.2 L900.7 1353.1 L901.2 1352.9 L901.6 1352.8 L902.1 1352.7 L902.6 1352.9 L903.0 1353.2 L903.5 1353.4 L904.0 1353.7 L904.5 1353.7 L904.9 1353.7 L905.4 1353.7 L905.9 1353.7 L906.3 1353.2 L906.8 1352.7 L907.3 1352.2 L907.7 1351.6 L908.2 1350.9 L908.7 1350.2 L909.2 1349.4 L909.6 1348.7 L910.1 1349.8 L910.6 1350.9 L911.0 1352.1 L911.5 1353.2 L912.0 1353.2 L912.5 1353.3 L912.9 1353.4 L913.4 1353.4 L913.9 1353.9 L914.3 1354.4 L914.8 1354.9 L915.3 1355.3 L915.7 1355.3 L916.2 1355.2 L916.7 1355.1 L917.2 1355.0 L917.6 1354.3 L918.1 1353.6 L918.6 1352.9 L919.0 1352.2 L919.5 1352.7 L920.0 1353.2 L920.5 1353.7 L920.9 1354.2 L921.4 1354.2 L921.9 1354.1 L922.3 1354.1 L922.8 1354.1 L923.3 1353.0 L923.7 1352.0 L924.2 1351.0 L924.7 1350.0 L925.2 1349.7 L925.6 1349.5 L926.1 1349.2 L926.6 1349.0 L927.0 1348.7 L927.5 1348.5 L928.0 1348.2 L928.4 1347.9 L928.9 1347.7 L929.4 1347.5 L929.9 1347.3 L930.3 1347.1 L930.8 1347.0 L931.3 1346.9 L931.7 1346.8 L932.2 1346.7 L932.7 1345.7 L933.2 1344.8 L933.6 1343.9 L934.1 1343.0 L934.6 1343.3 L935.0 1343.6 L935.5 1343.9 L936.0 1344.3 L936.4 1344.8 L936.9 1345.3 L937.4 1345.8 L937.9 1346.3 L938.3 1345.1 L938.8 1344.0 L939.3 1342.8 L939.7 1341.7 L940.2 1341.4 L940.7 1341.1 L941.2 1340.8 L941.6 1340.6 L942.1 1340.1 L942.6 1339.7 L943.0 1339.3 L943.5 1339.0 L944.0 1339.8 L944.4 1340.7 L944.9 1341.6 L945.4 1342.6 L945.9 1341.9 L946.3 1341.3 L946.8 1340.7 L947.3 1340.2 L947.7 1340.8 L948.2 1341.5 L948.7 1342.2 L949.2 1342.9 L949.6 1342.8 L950.1 1342.7 L950.6 1342.6 L951.0 1342.6 L951.5 1343.4 L952.0 1344.3 L952.4 1345.2 L952.9 1346.0 L953.4 1345.7 L953.9 1345.5 L954.3 1345.2 L954.8 1344.9 L955.3 1345.6 L955.7 1346.2 L956.2 1346.8 L956.7 1347.5 L957.1 1348.2 L957.6 1348.9 L958.1 1349.7 L958.6 1350.4 L959.0 1349.8 L959.5 1349.1 L960.0 1348.5 L960.4 1347.8 L960.9 1348.7 L961.4 1349.6 L961.9 1350.5 L962.3 1351.3 L962.8 1351.2 L963.3 1351.0 L963.7 1350.9 L964.2 1350.7 L964.7 1351.2 L965.1 1351.8 L965.6 1352.3 L966.1 1352.8 L966.6 1353.1 L967.0 1353.4 L967.5 1353.7 L968.0 1354.0 L968.4 1354.3 L968.9 1354.5 L969.4 1354.7 L969.9 1355.0 L970.3 1354.5 L970.8 1353.9 L971.3 1353.4 L971.7 1352.9 L972.2 1353.4 L972.7 1353.9 L973.1 1354.4 L973.6 1354.9 L974.1 1354.0 L974.6 1353.2 L975.0 1352.3 L975.5 1351.4 L976.0 1352.1 L976.4 1352.7 L976.9 1353.3 L977.4 1354.0 L977.8 1354.4 L978.3 1354.8 L978.8 1355.2 L979.3 1355.7 L979.7 1355.9 L980.2 1356.1 L980.7 1356.4 L981.1 1356.6 L981.6 1356.0 L982.1 1355.3 L982.6 1354.7 L983.0 1354.1 L983.5 1355.1 L984.0 1356.2 L984.4 1357.3 L984.9 1358.3 L985.4 1357.0 L985.8 1355.7 L986.3 1354.4 L986.8 1353.2 L987.3 1353.5 L987.7 1353.8 L988.2 1354.1 L988.7 1354.4 L989.1 1354.2 L989.6 1354.0 L990.1 1353.9 L990.6 1353.7 L991.0 1354.8 L991.5 1355.8 L992.0 1356.8 L992.4 1357.9 L992.9 1357.0 L993.4 1356.1 L993.8 1355.2 L994.3 1354.3 L994.8 1354.9 L995.3 1355.6 L995.7 1356.3 L996.2 1356.9 L996.7 1356.1 L997.1 1355.2 L997.6 1354.4 L998.1 1353.5 L998.6 1353.3 L999.0 1353.0 L999.5 1352.7 L1000.0 1352.4 L1000.4 1352.6 L1000.9 1352.8 L1001.4 1353.1 L1001.8 1353.3 L1002.3 1353.3 L1002.8 1353.4 L1003.3 1353.4 L1003.7 1353.5 L1004.2 1353.4 L1004.7 1353.4 L1005.1 1353.4 L1005.6 1353.4 L1006.1 1353.5 L1006.5 1353.6 L1007.0 1353.7 L1007.5 1353.9 L1008.0 1354.1 L1008.4 1354.3 L1008.9 1354.5 L1009.4 1354.7 L1009.8 1354.8 L1010.3 1354.9 L1010.8 1355.0 L1011.3 1355.0 L1011.7 1355.3 L1012.2 1355.6 L1012.7 1355.8 L1013.1 1356.1 L1013.6 1355.5 L1014.1 1354.9 L1014.5 1354.4 L1015.0 1353.8 L1015.5 1354.4 L1016.0 1355.1 L1016.4 1355.8 L1016.9 1356.4 L1017.4 1355.9 L1017.8 1355.4 L1018.3 1354.9 L1018.8 1354.4 L1019.3 1355.3 L1019.7 1356.3 L1020.2 1357.2 L1020.7 1358.1 L1021.1 1356.9 L1021.6 1355.7 L1022.1 1354.6 L1022.5 1353.4 L1023.0 1353.7 L1023.5 1354.1 L1024.0 1354.4 L1024.4 1354.7 L1024.9 1354.8 L1025.4 1354.8 L1025.8 1354.9 L1026.3 1354.9 L1026.8 1355.4 L1027.2 1356.0 L1027.7 1356.5 L1028.2 1357.0 L1028.7 1357.0 L1029.1 1357.1 L1029.6 1357.1 L1030.1 1357.2 L1030.5 1357.0 L1031.0 1356.9 L1031.5 1356.7 L1032.0 1356.6 L1032.4 1356.8 L1032.9 1356.9 L1033.4 1357.1 L1033.8 1357.3 L1034.3 1357.4 L1034.8 1357.5 L1035.2 1357.6 L1035.7 1357.7 L1036.2 1357.0 L1036.7 1356.3 L1037.1 1355.6 L1037.6 1354.9 L1038.1 1355.2 L1038.5 1355.5 L1039.0 1355.8 L1039.5 1356.1 L1040.0 1356.5 L1040.4 1356.9 L1040.9 1357.3 L1041.4 1357.7 L1041.8 1357.3 L1042.3 1356.9 L1042.8 1356.5 L1043.2 1356.1 L1043.7 1356.2 L1044.2 1356.3 L1044.7 1356.4 L1045.1 1356.4 L1045.6 1355.9 L1046.1 1355.3 L1046.5 1354.8 L1047.0 1354.2 L1047.5 1354.1 L1048.0 1353.9 L1048.4 1353.7 L1048.9 1353.5 L1049.4 1353.9 L1049.8 1354.4 L1050.3 1354.8 L1050.8 1355.2 L1051.2 1355.5 L1051.7 1355.7 L1052.2 1355.9 L1052.7 1356.1 L1053.1 1356.6 L1053.6 1357.1 L1054.1 1357.6 L1054.5 1358.0 L1055.0 1357.6 L1055.5 1357.2 L1055.9 1356.7 L1056.4 1356.3 L1056.9 1356.6 L1057.4 1356.8 L1057.8 1357.0 L1058.3 1357.3 L1058.8 1357.0 L1059.2 1356.7 L1059.7 1356.5 L1060.2 1356.2 L1060.7 1356.3 L1061.1 1356.3 L1061.6 1356.4 L1062.1 1356.5 L1062.5 1356.6 L1063.0 1356.7 L1063.5 1356.8 L1063.9 1357.0 L1064.4 1355.4 L1064.9 1353.9 L1065.4 1352.4 L1065.8 1350.9 L1066.3 1352.7 L1066.8 1354.4 L1067.2 1356.1 L1067.7 1357.9 L1068.2 1357.6 L1068.7 1357.4 L1069.1 1357.1 L1069.6 1356.9 L1070.1 1357.2 L1070.5 1357.6 L1071.0 1357.9 L1071.5 1358.3 L1071.9 1357.3 L1072.4 1356.3 L1072.9 1355.3 L1073.4 1354.4 L1073.8 1354.8 L1074.3 1355.2 L1074.8 1355.6 L1075.2 1356.1 L1075.7 1355.9 L1076.2 1355.8 L1076.6 1355.7 L1077.1 1355.5 L1077.6 1355.6 L1078.1 1355.7 L1078.5 1355.8 L1079.0 1355.8 L1079.5 1356.5 L1079.9 1357.2 L1080.4 1357.8 L1080.9 1358.5 L1081.4 1357.9 L1081.8 1357.4 L1082.3 1356.8 L1082.8 1356.3 L1083.2 1356.7 L1083.7 1357.1 L1084.2 1357.5 L1084.6 1357.9 L1085.1 1357.4 L1085.6 1357.0 L1086.1 1356.6 L1086.5 1356.2 L1087.0 1355.2 L1087.5 1354.2 L1087.9 1353.3 L1088.4 1352.3 L1088.9 1353.9 L1089.4 1355.5 L1089.8 1357.1 L1090.3 1358.7 L1090.8 1357.3 L1091.2 1356.0 L1091.7 1354.6 L1092.2 1353.3 L1092.6 1353.3 L1093.1 1353.3 L1093.6 1353.2 L1094.1 1353.2 L1094.5 1354.0 L1095.0 1354.8 L1095.5 1355.6 L1095.9 1356.4 L1096.4 1356.2 L1096.9 1356.0 L1097.4 1355.7 L1097.8 1355.5 L1098.3 1356.2 L1098.8 1356.8 L1099.2 1357.5 L1099.7 1358.2 L1100.2 1356.3 L1100.6 1354.4 L1101.1 1352.5 L1101.6 1350.5 L1102.1 1351.8 L1102.5 1353.0 L1103.0 1354.2 L1103.5 1355.4 L1103.9 1355.3 L1104.4 1355.2 L1104.9 1355.2 L1105.3 1355.1 L1105.8 1354.4 L1106.3 1353.8 L1106.8 1353.2 L1107.2 1352.6 L1107.7 1352.6 L1108.2 1352.7 L1108.6 1352.8 L1109.1 1352.9 L1109.6 1353.4 L1110.1 1353.8 L1110.5 1354.3 L1111.0 1354.8 L1111.5 1354.8 L1111.9 1354.9 L1112.4 1355.0 L1112.9 1355.0 L1113.3 1355.0 L1113.8 1355.0 L1114.3 1354.9 L1114.8 1354.9 L1115.2 1356.0 L1115.7 1357.1 L1116.2 1358.3 L1116.6 1359.4 L1117.1 1359.2 L1117.6 1358.9 L1118.1 1358.7 L1118.5 1358.4 L1119.0 1357.9 L1119.5 1357.5 L1119.9 1357.0 L1120.4 1356.5 L1120.9 1356.2 L1121.3 1356.0 L1121.8 1355.7 L1122.3 1355.4 L1122.8 1356.0 L1123.2 1356.6 L1123.7 1357.2 L1124.2 1357.8 L1124.6 1358.3 L1125.1 1358.8 L1125.6 1359.3 L1126.0 1359.7 L1126.5 1359.2 L1127.0 1358.6 L1127.5 1358.0 L1127.9 1357.4 L1128.4 1357.6 L1128.9 1357.8 L1129.3 1358.1 L1129.8 1358.3 L1130.3 1358.0 L1130.8 1357.7 L1131.2 1357.4 L1131.7 1357.1 L1132.2 1356.9 L1132.6 1356.7 L1133.1 1356.5 L1133.6 1356.3 L1134.0 1356.3 L1134.5 1356.2 L1135.0 1356.2 L1135.5 1356.2 L1135.9 1357.0 L1136.4 1357.8 L1136.9 1358.6 L1137.3 1359.4 L1137.8 1359.8 L1138.3 1360.2 L1138.8 1360.6 L1139.2 1361.0 L1139.7 1359.8 L1140.2 1358.6 L1140.6 1357.4 L1141.1 1356.3 L1141.6 1356.8 L1142.0 1357.3 L1142.5 1357.8 L1143.0 1358.3 L1143.5 1358.0 L1143.9 1357.7 L1144.4 1357.5 L1144.9 1357.2 L1145.3 1357.7 L1145.8 1358.1 L1146.3 1358.6 L1146.8 1359.0 L1147.2 1359.0 L1147.7 1359.0 L1148.2 1359.0 L1148.6 1359.0 L1149.1 1358.8 L1149.6 1358.6 L1150.0 1358.4 L1150.5 1358.2 L1151.0 1358.8 L1151.5 1359.4 L1151.9 1359.9 L1152.4 1360.5 L1152.9 1360.8 L1153.3 1361.2 L1153.8 1361.5 L1154.3 1361.8 L1154.7 1361.3 L1155.2 1360.7 L1155.7 1360.2 L1156.2 1359.7 L1156.6 1359.1 L1157.1 1358.5 L1157.6 1357.9 L1158.0 1357.3 L1158.5 1357.5 L1159.0 1357.8 L1159.5 1358.0 L1159.9 1358.3 L1160.4 1358.6 L1160.9 1358.9 L1161.3 1359.3 L1161.8 1359.6 L1162.3 1359.2 L1162.7 1358.7 L1163.2 1358.2 L1163.7 1357.8 L1164.2 1357.8 L1164.6 1357.8 L1165.1 1357.8 L1165.6 1357.8 L1166.0 1358.0 L1166.5 1358.2 L1167.0 1358.5 L1167.5 1358.7 L1167.9 1358.4 L1168.4 1358.1 L1168.9 1357.8 L1169.3 1357.5 L1169.8 1358.4 L1170.3 1359.3 L1170.7 1360.2 L1171.2 1361.2 L1171.7 1361.1 L1172.2 1361.1 L1172.6 1361.1 L1173.1 1361.1 L1173.6 1360.8 L1174.0 1360.5 L1174.5 1360.2 L1175.0 1359.9 L1175.4 1359.4 L1175.9 1358.8 L1176.4 1358.3 L1176.9 1357.7 L1177.3 1358.4 L1177.8 1359.1 L1178.3 1359.8 L1178.7 1360.5 L1179.2 1359.7 L1179.7 1358.9 L1180.2 1358.1 L1180.6 1357.3 L1181.1 1357.9 L1181.6 1358.6 L1182.0 1359.2 L1182.5 1359.8 L1183.0 1360.0 L1183.4 1360.1 L1183.9 1360.3 L1184.4 1360.4 L1184.9 1360.1 L1185.3 1359.7 L1185.8 1359.3 L1186.3 1358.9 L1186.7 1359.0 L1187.2 1359.0 L1187.7 1359.1 L1188.2 1359.1 L1188.6 1359.0 L1189.1 1359.0 L1189.6 1358.9 L1190.0 1358.8 L1190.5 1359.7 L1191.0 1360.6 L1191.4 1361.5 L1191.9 1362.4 L1192.4 1362.0 L1192.9 1361.6 L1193.3 1361.1 L1193.8 1360.7 L1194.3 1360.7 L1194.7 1360.7 L1195.2 1360.7 L1195.7 1360.7 L1196.2 1360.6 L1196.6 1360.5 L1197.1 1360.4 L1197.6 1360.3 L1198.0 1359.5 L1198.5 1358.7 L1199.0 1357.8 L1199.4 1357.0 L1199.9 1357.1 L1200.4 1357.3 L1200.9 1357.4 L1201.3 1357.6 L1201.8 1357.5 L1202.3 1357.5 L1202.7 1357.4 L1203.2 1357.4 L1203.7 1357.2 L1204.1 1357.0 L1204.6 1356.8 L1205.1 1356.6 L1205.6 1357.5 L1206.0 1358.5 L1206.5 1359.4 L1207.0 1360.3 L1207.4 1359.9 L1207.9 1359.5 L1208.4 1359.1 L1208.9 1358.7 L1209.3 1358.5 L1209.8 1358.2 L1210.3 1358.0 L1210.7 1357.7 L1211.2 1357.0 L1211.7 1356.3 L1212.1 1355.7 L1212.6 1355.0 L1213.1 1356.3 L1213.6 1357.7 L1214.0 1359.1 L1214.5 1360.4 L1215.0 1361.2 L1215.4 1361.9 L1215.9 1362.6 L1216.4 1363.3 L1216.9 1362.9 L1217.3 1362.6 L1217.8 1362.2 L1218.3 1361.8 L1218.7 1362.3 L1219.2 1362.8 L1219.7 1363.3 L1220.1 1363.8 L1220.6 1363.3 L1221.1 1362.8 L1221.6 1362.4 L1222.0 1361.9 L1222.5 1362.1 L1223.0 1362.3 L1223.4 1362.5 L1223.9 1362.7 L1224.4 1361.9 L1224.8 1361.2 L1225.3 1360.4 L1225.8 1359.6 L1226.3 1359.1 L1226.7 1358.6 L1227.2 1358.1 L1227.7 1357.6 L1228.1 1358.1 L1228.6 1358.5 L1229.1 1358.9 L1229.6 1359.3 L1230.0 1358.6 L1230.5 1358.0 L1231.0 1357.3 L1231.4 1356.7 L1231.9 1357.3 L1232.4 1358.0 L1232.8 1358.6 L1233.3 1359.3 L1233.8 1359.4 L1234.3 1359.6 L1234.7 1359.8 L1235.2 1359.9 L1235.7 1360.5 L1236.1 1361.1 L1236.6 1361.7 L1237.1 1362.3 L1237.6 1362.6 L1238.0 1362.8 L1238.5 1363.0 L1239.0 1363.2 L1239.4 1362.3 L1239.9 1361.4 L1240.4 1360.4 L1240.8 1359.5 L1241.3 1359.7 L1241.8 1360.0 L1242.3 1360.2 L1242.7 1360.4 L1243.2 1360.9 L1243.7 1361.5 L1244.1 1362.0 L1244.6 1362.5 L1245.1 1361.4 L1245.5 1360.3 L1246.0 1359.2 L1246.5 1358.1 L1247.0 1358.3 L1247.4 1358.6 L1247.9 1358.8 L1248.4 1359.1 L1248.8 1358.9 L1249.3 1358.7 L1249.8 1358.5 L1250.3 1358.4 L1250.7 1358.7 L1251.2 1359.0 L1251.7 1359.2 L1252.1 1359.5 L1252.6 1359.9 L1253.1 1360.2 L1253.5 1360.5 L1254.0 1360.8 L1254.5 1361.4 L1255.0 1361.9 L1255.4 1362.4 L1255.9 1362.9 L1256.4 1362.9 L1256.8 1362.8 L1257.3 1362.7 L1257.8 1362.6 L1258.3 1362.2 L1258.7 1361.8 L1259.2 1361.4 L1259.7 1361.0 L1260.1 1361.2 L1260.6 1361.4 L1261.1 1361.6 L1261.5 1361.8 L1262.0 1361.4 L1262.5 1361.1 L1263.0 1360.7 L1263.4 1360.4 L1263.9 1360.2 L1264.4 1360.1 L1264.8 1359.9 L1265.3 1359.7 L1265.8 1359.3 L1266.3 1358.9 L1266.7 1358.4 L1267.2 1357.9 L1267.7 1358.0 L1268.1 1358.1 L1268.6 1358.1 L1269.1 1358.0 L1269.5 1357.4 L1270.0 1356.6 L1270.5 1355.8 L1271.0 1354.9 L1271.4 1354.2 L1271.9 1353.3 L1272.4 1352.4 L1272.8 1351.4 L1273.3 1349.4 L1273.8 1347.3 L1274.2 1345.1 L1274.7 1342.6 L1275.2 1341.4 L1275.7 1340.0 L1276.1 1338.4 L1276.6 1336.6 L1277.1 1333.8 L1277.5 1330.8 L1278.0 1327.5 L1278.5 1323.9 L1279.0 1320.9 L1279.4 1317.6 L1279.9 1314.0 L1280.4 1310.0 L1280.8 1304.5 L1281.3 1298.6 L1281.8 1292.3 L1282.2 1285.7 L1282.7 1278.7 L1283.2 1271.2 L1283.7 1263.4 L1284.1 1255.3 L1284.6 1246.7 L1285.1 1237.8 L1285.5 1228.6 L1286.0 1218.9 L1286.5 1210.3 L1287.0 1201.3 L1287.4 1191.9 L1287.9 1182.4 L1288.4 1170.3 L1288.8 1158.0 L1289.3 1145.5 L1289.8 1132.9 L1290.2 1122.4 L1290.7 1111.8 L1291.2 1101.2 L1291.7 1090.6 L1292.1 1078.4 L1292.6 1066.2 L1293.1 1054.3 L1293.5 1042.5 L1294.0 1032.1 L1294.5 1022.0 L1294.9 1012.3 L1295.4 1003.0 L1295.9 993.4 L1296.4 984.3 L1296.8 975.8 L1297.3 967.9 L1297.8 962.0 L1298.2 956.8 L1298.7 952.3 L1299.2 948.6 L1299.7 946.0 L1300.1 944.1 L1300.6 943.1 L1301.1 943.0 L1301.5 941.0 L1302.0 939.9 L1302.5 939.6 L1302.9 940.2 L1303.4 942.7 L1303.9 946.1 L1304.4 950.3 L1304.8 955.2 L1305.3 963.4 L1305.8 972.2 L1306.2 981.7 L1306.7 991.8 L1307.2 1000.5 L1307.7 1009.7 L1308.1 1019.4 L1308.6 1029.4 L1309.1 1039.6 L1309.5 1050.2 L1310.0 1060.9 L1310.5 1071.9 L1310.9 1083.3 L1311.4 1094.8 L1311.9 1106.4 L1312.4 1117.9 L1312.8 1129.3 L1313.3 1140.5 L1313.8 1151.7 L1314.2 1162.6 L1314.7 1173.2 L1315.2 1183.5 L1315.7 1193.6 L1316.1 1203.4 L1316.6 1213.4 L1317.1 1223.1 L1317.5 1232.4 L1318.0 1241.4 L1318.5 1249.8 L1318.9 1257.8 L1319.4 1265.5 L1319.9 1272.8 L1320.4 1279.3 L1320.8 1285.5 L1321.3 1291.4 L1321.8 1296.8 L1322.2 1303.8 L1322.7 1310.5 L1323.2 1316.8 L1323.6 1322.8 L1324.1 1326.8 L1324.6 1330.5 L1325.1 1333.9 L1325.5 1337.1 L1326.0 1339.1 L1326.5 1340.8 L1326.9 1342.3 L1327.4 1343.6 L1327.9 1344.8 L1328.4 1345.9 L1328.8 1346.7 L1329.3 1347.4 L1329.8 1350.1 L1330.2 1352.7 L1330.7 1355.1 L1331.2 1357.4 L1331.6 1357.4 L1332.1 1357.3 L1332.6 1357.0 L1333.1 1356.7 L1333.5 1357.9 L1334.0 1359.0 L1334.5 1360.0 L1334.9 1361.0 L1335.4 1360.6 L1335.9 1360.2 L1336.4 1359.7 L1336.8 1359.2 L1337.3 1359.7 L1337.8 1360.2 L1338.2 1360.7 L1338.7 1361.1 L1339.2 1360.9 L1339.6 1360.8 L1340.1 1360.6 L1340.6 1360.4 L1341.1 1361.3 L1341.5 1362.3 L1342.0 1363.2 L1342.5 1364.2 L1342.9 1363.5 L1343.4 1362.9 L1343.9 1362.3 L1344.3 1361.7 L1344.8 1361.6 L1345.3 1361.6 L1345.8 1361.5 L1346.2 1361.5 L1346.7 1361.9 L1347.2 1362.3 L1347.6 1362.7 L1348.1 1363.1 L1348.6 1363.0 L1349.1 1362.9 L1349.5 1362.7 L1350.0 1362.6 L1350.5 1362.3 L1350.9 1362.1 L1351.4 1361.8 L1351.9 1361.6 L1352.3 1360.8 L1352.8 1360.0 L1353.3 1359.2 L1353.8 1358.4 L1354.2 1358.8 L1354.7 1359.1 L1355.2 1359.5 L1355.6 1359.8 L1356.1 1359.8 L1356.6 1359.8 L1357.1 1359.8 L1357.5 1359.8 L1358.0 1360.4 L1358.5 1361.0 L1358.9 1361.6 L1359.4 1362.2 L1359.9 1361.7 L1360.3 1361.2 L1360.8 1360.7 L1361.3 1360.2 L1361.8 1360.4 L1362.2 1360.7 L1362.7 1360.9 L1363.2 1361.2 L1363.6 1361.4 L1364.1 1361.7 L1364.6 1362.0 L1365.1 1362.2 L1365.5 1362.4 L1366.0 1362.6 L1366.5 1362.9 L1366.9 1363.1 L1367.4 1363.6 L1367.9 1364.1 L1368.3 1364.6 L1368.8 1365.0 L1369.3 1365.1 L1369.8 1365.1 L1370.2 1365.1 L1370.7 1365.1 L1371.2 1364.3 L1371.6 1363.5 L1372.1 1362.7 L1372.6 1362.0 L1373.0 1362.3 L1373.5 1362.7 L1374.0 1363.1 L1374.5 1363.5 L1374.9 1363.5 L1375.4 1363.5 L1375.9 1363.5 L1376.3 1363.5 L1376.8 1364.0 L1377.3 1364.4 L1377.8 1364.8 L1378.2 1365.3 L1378.7 1365.0 L1379.2 1364.8 L1379.6 1364.5 L1380.1 1364.3 L1380.6 1364.8 L1381.0 1365.3 L1381.5 1365.8 L1382.0 1366.3 L1382.5 1366.0 L1382.9 1365.7 L1383.4 1365.4 L1383.9 1365.1 L1384.3 1364.8 L1384.8 1364.5 L1385.3 1364.2 L1385.8 1363.8 L1386.2 1364.0 L1386.7 1364.1 L1387.2 1364.3 L1387.6 1364.5 L1388.1 1364.0 L1388.6 1363.6 L1389.0 1363.2 L1389.5 1362.8 L1390.0 1362.6 L1390.5 1362.5 L1390.9 1362.3 L1391.4 1362.2 L1391.9 1362.6 L1392.3 1363.1 L1392.8 1363.5 L1393.3 1363.9 L1393.7 1363.8 L1394.2 1363.6 L1394.7 1363.5 L1395.2 1363.3 L1395.6 1363.2 L1396.1 1363.0 L1396.6 1362.8 L1397.0 1362.6 L1397.5 1362.8 L1398.0 1362.9 L1398.5 1363.1 L1398.9 1363.2 L1399.4 1363.4 L1399.9 1363.6 L1400.3 1363.7 L1400.8 1363.9 L1401.3 1362.1 L1401.7 1360.3 L1402.2 1358.5 L1402.7 1356.7 L1403.2 1356.7 L1403.6 1356.6 L1404.1 1356.5 L1404.6 1356.4 L1405.0 1356.2 L1405.5 1356.0 L1406.0 1355.7 L1406.5 1355.3 L1406.9 1353.5 L1407.4 1351.7 L1407.9 1349.7 L1408.3 1347.8 L1408.8 1345.8 L1409.3 1343.7 L1409.7 1341.6 L1410.2 1339.5 L1410.7 1338.6 L1411.2 1337.6 L1411.6 1336.7 L1412.1 1335.7 L1412.6 1333.5 L1413.0 1331.3 L1413.5 1329.1 L1414.0 1326.9 L1414.5 1327.1 L1414.9 1327.4 L1415.4 1327.6 L1415.9 1327.8 L1416.3 1326.9 L1416.8 1326.1 L1417.3 1325.2 L1417.7 1324.4 L1418.2 1323.0 L1418.7 1321.6 L1419.2 1320.3 L1419.6 1319.1 L1420.1 1317.9 L1420.6 1316.8 L1421.0 1315.7 L1421.5 1314.8 L1422.0 1313.3 L1422.4 1311.9 L1422.9 1310.6 L1423.4 1309.3 L1423.9 1309.9 L1424.3 1310.5 L1424.8 1311.2 L1425.3 1312.1 L1425.7 1310.1 L1426.2 1308.3 L1426.7 1306.6 L1427.2 1304.9 L1427.6 1306.9 L1428.1 1308.9 L1428.6 1311.1 L1429.0 1313.3 L1429.5 1314.1 L1430.0 1314.9 L1430.4 1315.9 L1430.9 1316.9 L1431.4 1318.1 L1431.9 1319.3 L1432.3 1320.6 L1432.8 1322.0 L1433.3 1324.0 L1433.7 1326.0 L1434.2 1328.1 L1434.7 1330.2 L1435.2 1331.7 L1435.6 1333.3 L1436.1 1334.9 L1436.6 1336.5 L1437.0 1337.2 L1437.5 1338.0 L1438.0 1338.7 L1438.4 1339.4 L1438.9 1341.1 L1439.4 1342.7 L1439.9 1344.3 L1440.3 1345.9 L1440.8 1346.4 L1441.3 1346.9 L1441.7 1347.3 L1442.2 1347.6 L1442.7 1349.4 L1443.1 1351.2 L1443.6 1352.8 L1444.1 1354.5 L1444.6 1354.7 L1445.0 1354.9 L1445.5 1355.0 L1446.0 1355.1 L1446.4 1356.5 L1446.9 1357.8 L1447.4 1359.1 L1447.9 1360.3 L1448.3 1360.9 L1448.8 1361.4 L1449.3 1361.8 L1449.7 1362.3 L1450.2 1361.9 L1450.7 1361.5 L1451.1 1361.1 L1451.6 1360.6 L1452.1 1361.4 L1452.6 1362.2 L1453.0 1362.9 L1453.5 1363.6 L1454.0 1364.1 L1454.4 1364.6 L1454.9 1365.1 L1455.4 1365.6 L1455.9 1365.5 L1456.3 1365.4 L1456.8 1365.3 L1457.3 1365.2 L1457.7 1365.4 L1458.2 1365.5 L1458.7 1365.7 L1459.1 1365.9 L1459.6 1365.9 L1460.1 1365.8 L1460.6 1365.8 L1461.0 1365.8 L1461.5 1365.7 L1462.0 1365.6 L1462.4 1365.5 L1462.9 1365.3 L1463.4 1365.3 L1463.9 1365.2 L1464.3 1365.1 L1464.8 1365.0 L1465.3 1365.2 L1465.7 1365.4 L1466.2 1365.5 L1466.7 1365.7 L1467.1 1365.3 L1467.6 1364.9 L1468.1 1364.6 L1468.6 1364.2 L1469.0 1364.2 L1469.5 1364.2 L1470.0 1364.2 L1470.4 1364.2 L1470.9 1364.2 L1471.4 1364.3 L1471.8 1364.3 L1472.3 1364.4 L1472.8 1364.7 L1473.3 1365.1 L1473.7 1365.4 L1474.2 1365.8 L1474.7 1366.1 L1475.1 1366.3 L1475.6 1366.6 L1476.1 1366.8 L1476.6 1366.3 L1477.0 1365.7 L1477.5 1365.2 L1478.0 1364.6 L1478.4 1364.0 L1478.9 1363.3 L1479.4 1362.6 L1479.8 1362.0 L1480.3 1362.2 L1480.8 1362.4 L1481.3 1362.6 L1481.7 1362.8 L1482.2 1362.1 L1482.7 1361.5 L1483.1 1360.9 L1483.6 1360.2 L1484.1 1360.8 L1484.6 1361.4 L1485.0 1362.0 L1485.5 1362.5 L1486.0 1361.9 L1486.4 1361.2 L1486.9 1360.6 L1487.4 1360.0 L1487.8 1360.5 L1488.3 1361.0 L1488.8 1361.5 L1489.3 1362.0 L1489.7 1361.7 L1490.2 1361.4 L1490.7 1361.0 L1491.1 1360.7 L1491.6 1360.3 L1492.1 1359.9 L1492.5 1359.5 L1493.0 1359.1 L1493.5 1359.4 L1494.0 1359.8 L1494.4 1360.2 L1494.9 1360.5 L1495.4 1360.4 L1495.8 1360.3 L1496.3 1360.2 L1496.8 1360.0 L1497.3 1359.1 L1497.7 1358.1 L1498.2 1357.2 L1498.7 1356.2 L1499.1 1357.5 L1499.6 1358.8 L1500.1 1360.1 L1500.5 1361.4 L1501.0 1361.8 L1501.5 1362.2 L1502.0 1362.6 L1502.4 1363.0 L1502.9 1362.7 L1503.4 1362.5 L1503.8 1362.2 L1504.3 1361.9 L1504.8 1360.9 L1505.3 1359.8 L1505.7 1358.8 L1506.2 1357.8 L1506.7 1358.8 L1507.1 1359.8 L1507.6 1360.8 L1508.1 1361.9 L1508.5 1362.0 L1509.0 1362.2 L1509.5 1362.3 L1510.0 1362.5 L1510.4 1362.7 L1510.9 1363.0 L1511.4 1363.2 L1511.8 1363.5 L1512.3 1363.1 L1512.8 1362.7 L1513.3 1362.4 L1513.7 1362.0 L1514.2 1362.3 L1514.7 1362.5 L1515.1 1362.7 L1515.6 1363.0 L1516.1 1363.1 L1516.5 1363.2 L1517.0 1363.4 L1517.5 1363.5 L1518.0 1363.9 L1518.4 1364.2 L1518.9 1364.5 L1519.4 1364.8 L1519.8 1365.3 L1520.3 1365.9 L1520.8 1366.4 L1521.2 1366.9 L1521.7 1366.1 L1522.2 1365.4 L1522.7 1364.6 L1523.1 1363.8 L1523.6 1364.2 L1524.1 1364.6 L1524.5 1365.0 L1525.0 1365.4 L1525.5 1366.0 L1526.0 1366.6 L1526.4 1367.2 L1526.9 1367.8 L1527.4 1367.4 L1527.8 1367.0 L1528.3 1366.5 L1528.8 1366.1 L1529.2 1366.1 L1529.7 1366.1 L1530.2 1366.1 L1530.7 1366.1 L1531.1 1366.5 L1531.6 1366.9 L1532.1 1367.3 L1532.5 1367.7 L1533.0 1367.1 L1533.5 1366.4 L1534.0 1365.8 L1534.4 1365.1 L1534.9 1365.9 L1535.4 1366.7 L1535.8 1367.5 L1536.3 1368.3 L1536.8 1367.6 L1537.2 1366.9 L1537.7 1366.2 L1538.2 1365.5 L1538.7 1366.2 L1539.1 1366.8 L1539.6 1367.4 L1540.1 1368.0 L1540.5 1367.8 L1541.0 1367.6 L1541.5 1367.4 L1541.9 1367.2 L1542.4 1367.4 L1542.9 1367.6 L1543.4 1367.9 L1543.8 1368.1 L1544.3 1367.6 L1544.8 1367.2 L1545.2 1366.7 L1545.7 1366.2 L1546.2 1366.4 L1546.7 1366.6 L1547.1 1366.8 L1547.6 1367.0 L1548.1 1367.5 L1548.5 1367.9 L1549.0 1368.3 L1549.5 1368.8 L1549.9 1368.2 L1550.4 1367.7 L1550.9 1367.2 L1551.4 1366.6 L1551.8 1366.8 L1552.3 1367.1 L1552.8 1367.3 L1553.2 1367.5 L1553.7 1367.5 L1554.2 1367.6 L1554.7 1367.6 L1555.1 1367.6 L1555.6 1367.5 L1556.1 1367.4 L1556.5 1367.3 L1557.0 1367.2 L1557.5 1367.2 L1557.9 1367.2 L1558.4 1367.2 L1558.9 1367.3 L1559.4 1367.8 L1559.8 1368.3 L1560.3 1368.8 L1560.8 1369.3 L1561.2 1369.5 L1561.7 1369.7 L1562.2 1369.9 L1562.7 1370.1 L1563.1 1369.5 L1563.6 1368.9 L1564.1 1368.3 L1564.5 1367.7 L1565.0 1367.6 L1565.5 1367.4 L1565.9 1367.2 L1566.4 1367.0 L1566.9 1367.6 L1567.4 1368.2 L1567.8 1368.9 L1568.3 1369.5 L1568.8 1368.7 L1569.2 1367.8 L1569.7 1367.0 L1570.2 1366.2 L1570.6 1366.3 L1571.1 1366.4 L1571.6 1366.5 L1572.1 1366.6 L1572.5 1366.4 L1573.0 1366.1 L1573.5 1365.9 L1573.9 1365.6 L1574.4 1365.7 L1574.9 1365.7 L1575.4 1365.8 L1575.8 1365.9 L1576.3 1365.9 L1576.8 1365.9 L1577.2 1365.9 L1577.7 1366.0 L1578.2 1366.5 L1578.6 1367.1 L1579.1 1367.6 L1579.6 1368.1 L1580.1 1367.8 L1580.5 1367.4 L1581.0 1367.1 L1581.5 1366.7 L1581.9 1367.1 L1582.4 1367.5 L1582.9 1367.8 L1583.4 1368.2 L1583.8 1368.3 L1584.3 1368.5 L1584.8 1368.6 L1585.2 1368.7 L1585.7 1368.6 L1586.2 1368.5 L1586.6 1368.4 L1587.1 1368.3 L1587.6 1368.4 L1588.1 1368.5 L1588.5 1368.6 L1589.0 1368.8 L1589.5 1368.6 L1589.9 1368.4 L1590.4 1368.2 L1590.9 1368.1 L1591.3 1367.9 L1591.8 1367.7 L1592.3 1367.5 L1592.8 1367.3 L1593.2 1367.7 L1593.7 1368.1 L1594.2 1368.5 L1594.6 1368.9 L1595.1 1368.8 L1595.6 1368.6 L1596.1 1368.5 L1596.5 1368.4 L1597.0 1368.4 L1597.5 1368.3 L1597.9 1368.3 L1598.4 1368.3 L1598.9 1368.2 L1599.3 1368.2 L1599.8 1368.1 L1600.3 1368.1 L1600.8 1367.9 L1601.2 1367.7 L1601.7 1367.5 L1602.2 1367.3 L1602.6 1367.3 L1603.1 1367.4 L1603.6 1367.4 L1604.1 1367.5 L1604.5 1368.2 L1605.0 1369.0 L1605.5 1369.7 L1605.9 1370.4 L1606.4 1369.6 L1606.9 1368.8 L1607.3 1368.0 L1607.8 1367.2 L1608.3 1367.2 L1608.8 1367.2 L1609.2 1367.2 L1609.7 1367.2 L1610.2 1367.4 L1610.6 1367.6 L1611.1 1367.8 L1611.6 1368.0 L1612.0 1367.8 L1612.5 1367.6 L1613.0 1367.3 L1613.5 1367.1 L1613.9 1366.9 L1614.4 1366.8 L1614.9 1366.6 L1615.3 1366.4 L1615.8 1367.2 L1616.3 1368.0 L1616.8 1368.8 L1617.2 1369.5 L1617.7 1369.0 L1618.2 1368.5 L1618.6 1368.0 L1619.1 1367.5 L1619.6 1367.6 L1620.0 1367.6 L1620.5 1367.7 L1621.0 1367.8 L1621.5 1368.0 L1621.9 1368.2 L1622.4 1368.4 L1622.9 1368.7 L1623.3 1368.5 L1623.8 1368.3 L1624.3 1368.1 L1624.8 1368.0 L1625.2 1367.7 L1625.7 1367.4 L1626.2 1367.1 L1626.6 1366.9 L1627.1 1366.3 L1627.6 1365.8 L1628.0 1365.2 L1628.5 1364.7 L1629.0 1364.7 L1629.5 1364.8 L1629.9 1364.8 L1630.4 1364.9 L1630.9 1365.3 L1631.3 1365.7 L1631.8 1366.1 L1632.3 1366.5 L1632.8 1366.9 L1633.2 1367.2 L1633.7 1367.6 L1634.2 1367.9 L1634.6 1368.0 L1635.1 1368.1 L1635.6 1368.2 L1636.0 1368.3 L1636.5 1367.8 L1637.0 1367.3 L1637.5 1366.8 L1637.9 1366.4 L1638.4 1367.0 L1638.9 1367.7 L1639.3 1368.4 L1639.8 1369.1 L1640.3 1368.9 L1640.7 1368.7 L1641.2 1368.5 L1641.7 1368.3 L1642.2 1368.6 L1642.6 1369.0 L1643.1 1369.4 L1643.6 1369.7 L1644.0 1369.8 L1644.5 1369.8 L1645.0 1369.8 L1645.5 1369.9 L1645.9 1369.3 L1646.4 1368.7 L1646.9 1368.2 L1647.3 1367.6 L1647.8 1368.0 L1648.3 1368.3 L1648.7 1368.7 L1649.2 1369.1 L1649.7 1368.7 L1650.2 1368.3 L1650.6 1367.9 L1651.1 1367.5 L1651.6 1367.7 L1652.0 1367.8 L1652.5 1368.0 L1653.0 1368.1 L1653.5 1368.0 L1653.9 1367.8 L1654.4 1367.6 L1654.9 1367.5 L1655.3 1367.3 L1655.8 1367.0 L1656.3 1366.8 L1656.7 1366.6 L1657.2 1367.0 L1657.7 1367.4 L1658.2 1367.9 L1658.6 1368.3 L1659.1 1368.3 L1659.6 1368.3 L1660.0 1368.4 L1660.5 1368.4 L1661.0 1368.6 L1661.4 1368.9 L1661.9 1369.2 L1662.4 1369.4 L1662.9 1368.9 L1663.3 1368.5 L1663.8 1368.0 L1664.3 1367.5 L1664.7 1367.7 L1665.2 1368.0 L1665.7 1368.2 L1666.2 1368.4 L1666.6 1368.8 L1667.1 1369.2 L1667.6 1369.6 L1668.0 1370.0 L1668.5 1369.8 L1669.0 1369.6 L1669.4 1369.4 L1669.9 1369.2 L1670.4 1369.1 L1670.9 1368.9 L1671.3 1368.8 L1671.8 1368.6 L1672.3 1368.8 L1672.7 1368.9 L1673.2 1369.1 L1673.7 1369.2 L1674.2 1368.5 L1674.6 1367.8 L1675.1 1367.1 L1675.6 1366.4 L1676.0 1367.2 L1676.5 1367.9 L1677.0 1368.7 L1677.4 1369.5 L1677.9 1369.1 L1678.4 1368.8 L1678.9 1368.5 L1679.3 1368.1 L1679.8 1368.0 L1680.3 1367.9 L1680.7 1367.8 L1681.2 1367.7 L1681.7 1368.1 L1682.2 1368.4 L1682.6 1368.7 L1683.1 1369.0 L1683.6 1369.1 L1684.0 1369.2 L1684.5 1369.3 L1685.0 1369.4 L1685.4 1369.5 L1685.9 1369.5 L1686.4 1369.5 L1686.9 1369.6 L1687.3 1370.1 L1687.8 1370.6 L1688.3 1371.2 L1688.7 1371.7 L1689.2 1371.4 L1689.7 1371.0 L1690.1 1370.7 L1690.6 1370.3 L1691.1 1370.0 L1691.6 1369.6 L1692.0 1369.2 L1692.5 1368.9 L1693.0 1369.0 L1693.4 1369.1 L1693.9 1369.2 L1694.4 1369.3 L1694.9 1369.5 L1695.3 1369.7 L1695.8 1369.9 L1696.3 1370.1 L1696.7 1369.4 L1697.2 1368.7 L1697.7 1368.0 L1698.1 1367.3 L1698.6 1367.8 L1699.1 1368.2 L1699.6 1368.6 L1700.0 1369.0 L1700.5 1369.0 L1701.0 1369.1 L1701.4 1369.1 L1701.9 1369.1 L1702.4 1369.1 L1702.9 1369.2 L1703.3 1369.2 L1703.8 1369.2 L1704.3 1369.6 L1704.7 1369.9 L1705.2 1370.3 L1705.7 1370.6 L1706.1 1370.3 L1706.6 1369.9 L1707.1 1369.5 L1707.6 1369.2 L1708.0 1369.6 L1708.5 1370.0 L1709.0 1370.4 L1709.4 1370.9 L1709.9 1370.3 L1710.4 1369.7 L1710.8 1369.1 L1711.3 1368.5 L1711.8 1368.7 L1712.3 1368.9 L1712.7 1369.0 L1713.2 1369.2 L1713.7 1369.5 L1714.1 1369.9 L1714.6 1370.2 L1715.1 1370.5 L1715.6 1370.4 L1716.0 1370.3 L1716.5 1370.1 L1717.0 1370.0 L1717.4 1369.7 L1717.9 1369.4 L1718.4 1369.0 L1718.8 1368.7 L1719.3 1369.1 L1719.8 1369.4 L1720.3 1369.8 L1720.7 1370.1 L1721.2 1369.5 L1721.7 1368.9 L1722.1 1368.4 L1722.6 1367.8 L1723.1 1368.1 L1723.6 1368.5 L1724.0 1368.9 L1724.5 1369.3 L1725.0 1369.7 L1725.4 1370.1 L1725.9 1370.6 L1726.4 1371.0 L1726.8 1370.7 L1727.3 1370.4 L1727.8 1370.2 L1728.3 1369.9 L1728.7 1370.0 L1729.2 1370.0 L1729.7 1370.1 L1730.1 1370.2 L1730.6 1370.0 L1731.1 1369.8 L1731.6 1369.6 L1732.0 1369.4 L1732.5 1369.2 L1733.0 1368.9 L1733.4 1368.6 L1733.9 1368.4 L1734.4 1368.6 L1734.8 1368.9 L1735.3 1369.1 L1735.8 1369.4 L1736.3 1369.5 L1736.7 1369.7 L1737.2 1369.9 L1737.7 1370.0 L1738.1 1370.0 L1738.6 1369.9 L1739.1 1369.9 L1739.5 1369.8 L1740.0 1369.7 L1740.5 1369.5 L1741.0 1369.4 L1741.4 1369.2 L1741.9 1369.0 L1742.4 1368.7 L1742.8 1368.4 L1743.3 1368.2 L1743.8 1368.5 L1744.3 1368.8 L1744.7 1369.1 L1745.2 1369.5 L1745.7 1369.6 L1746.1 1369.8 L1746.6 1370.0 L1747.1 1370.2 L1747.5 1370.2 L1748.0 1370.1 L1748.5 1370.1 L1749.0 1370.0 L1749.4 1369.4 L1749.9 1368.8 L1750.4 1368.2 L1750.8 1367.6 L1751.3 1367.9 L1751.8 1368.2 L1752.3 1368.6 L1752.7 1368.9 L1753.2 1369.1 L1753.7 1369.3 L1754.1 1369.5 L1754.6 1369.7 L1755.1 1369.8 L1755.5 1369.9 L1756.0 1370.1 L1756.5 1370.2 L1757.0 1369.9 L1757.4 1369.6 L1757.9 1369.3 L1758.4 1369.1 L1758.8 1369.3 L1759.3 1369.5 L1759.8 1369.8 L1760.2 1370.0 L1760.7 1369.8 L1761.2 1369.5 L1761.7 1369.3 L1762.1 1369.1 L1762.6 1369.1 L1763.1 1369.1 L1763.5 1369.1 L1764.0 1369.1 L1764.5 1369.2 L1765.0 1369.3 L1765.4 1369.4 L1765.9 1369.5 L1766.4 1369.9 L1766.8 1370.4 L1767.3 1370.9 L1767.8 1371.4 L1768.2 1371.5 L1768.7 1371.5 L1769.2 1371.6 L1769.7 1371.7 L1770.1 1371.5 L1770.6 1371.4 L1771.1 1371.3 L1771.5 1371.1 L1772.0 1371.2 L1772.5 1371.3 L1773.0 1371.4 L1773.4 1371.5 L1773.9 1370.7 L1774.4 1370.0 L1774.8 1369.3 L1775.3 1368.5 L1775.8 1368.7 L1776.2 1368.8 L1776.7 1369.0 L1777.2 1369.1 L1777.7 1369.9 L1778.1 1370.7 L1778.6 1371.4 L1779.1 1372.2 L1779.5 1372.0 L1780.0 1371.9 L1780.5 1371.7 L1781.0 1371.5 L1781.4 1371.4 L1781.9 1371.2 L1782.4 1371.1 L1782.8 1370.9 L1783.3 1370.5 L1783.8 1370.1 L1784.2 1369.7 L1784.7 1369.2 L1785.2 1369.3 L1785.7 1369.3 L1786.1 1369.3 L1786.6 1369.3 L1787.1 1369.3 L1787.5 1369.4 L1788.0 1369.4 L1788.5 1369.4 L1788.9 1369.5 L1789.4 1369.6 L1789.9 1369.7 L1790.4 1369.8 L1790.8 1369.8 L1791.3 1369.8 L1791.8 1369.7 L1792.2 1369.7 L1792.7 1370.0 L1793.2 1370.2 L1793.7 1370.4 L1794.1 1370.6 L1794.6 1371.1 L1795.1 1371.6 L1795.5 1372.0 L1796.0 1372.5 L1796.5 1372.0 L1796.9 1371.4 L1797.4 1370.9 L1797.9 1370.4 L1798.4 1370.8 L1798.8 1371.1 L1799.3 1371.5 L1799.8 1371.8 L1800.2 1371.7 L1800.7 1371.5 L1801.2 1371.3 L1801.7 1371.1 L1802.1 1371.3 L1802.6 1371.6 L1803.1 1371.8 L1803.5 1372.0 L1804.0 1371.6 L1804.5 1371.1 L1804.9 1370.7 L1805.4 1370.3 L1805.9 1370.3 L1806.4 1370.3 L1806.8 1370.3 L1807.3 1370.3 L1807.8 1370.4 L1808.2 1370.6 L1808.7 1370.7 L1809.2 1370.9 L1809.6 1370.8 L1810.1 1370.7 L1810.6 1370.5 L1811.1 1370.4 L1811.5 1370.5 L1812.0 1370.6 L1812.5 1370.7 L1812.9 1370.8 L1813.4 1370.9 L1813.9 1371.0 L1814.4 1371.0 L1814.8 1371.1 L1815.3 1370.6 L1815.8 1370.1 L1816.2 1369.6 L1816.7 1369.1 L1817.2 1368.9 L1817.6 1368.7 L1818.1 1368.5 L1818.6 1368.4 L1819.1 1368.8 L1819.5 1369.3 L1820.0 1369.7 L1820.5 1370.2 L1820.9 1369.9 L1821.4 1369.6 L1821.9 1369.3 L1822.4 1369.0 L1822.8 1368.8 L1823.3 1368.6 L1823.8 1368.4 L1824.2 1368.2 L1824.7 1368.6 L1825.2 1369.0 L1825.6 1369.5 L1826.1 1369.9 L1826.6 1370.0 L1827.1 1370.1 L1827.5 1370.2 L1828.0 1370.3 L1828.5 1370.4 L1828.9 1370.6 L1829.4 1370.7 L1829.9 1370.8 L1830.4 1370.9 L1830.8 1370.9 L1831.3 1370.9 L1831.8 1370.9 L1832.2 1370.8 L1832.7 1370.7 L1833.2 1370.6 L1833.6 1370.5 L1834.1 1370.8 L1834.6 1371.0 L1835.1 1371.3 L1835.5 1371.6 L1836.0 1371.0 L1836.5 1370.4 L1836.9 1369.8 L1837.4 1369.2 L1837.9 1369.4 L1838.3 1369.6 L1838.8 1369.7 L1839.3 1369.9 L1839.8 1369.9 L1840.2 1370.0 L1840.7 1370.0 L1841.2 1370.0 L1841.6 1370.2 L1842.1 1370.4 L1842.6 1370.5 L1843.1 1370.7 L1843.5 1370.5 L1844.0 1370.2 L1844.5 1369.9 L1844.9 1369.7 L1845.4 1369.7 L1845.9 1369.8 L1846.3 1369.9 L1846.8 1369.9 L1847.3 1369.6 L1847.8 1369.3 L1848.2 1369.0 L1848.7 1368.7 L1849.2 1368.7 L1849.6 1368.7 L1850.1 1368.7 L1850.6 1368.7 L1851.1 1369.1 L1851.5 1369.6 L1852.0 1370.0 L1852.5 1370.5 L1852.9 1370.6 L1853.4 1370.7 L1853.9 1370.8 L1854.3 1370.9 L1854.8 1370.8 L1855.3 1370.7 L1855.8 1370.7 L1856.2 1370.6 L1856.7 1370.7 L1857.2 1370.7 L1857.6 1370.8 L1858.1 1370.8 L1858.6 1370.7 L1859.0 1370.6 L1859.5 1370.4 L1860.0 1370.3 L1860.5 1370.2 L1860.9 1370.1 L1861.4 1370.1 L1861.9 1370.0 L1862.3 1370.1 L1862.8 1370.2 L1863.3 1370.4 L1863.8 1370.5 L1864.2 1370.7 L1864.7 1370.9 L1865.2 1371.0 L1865.6 1371.2 L1866.1 1371.1 L1866.6 1371.0 L1867.0 1370.9 L1867.5 1370.8 L1868.0 1370.9 L1868.5 1371.0 L1868.9 1371.1 L1869.4 1371.2 L1869.9 1371.1 L1870.3 1371.0 L1870.8 1370.9 L1871.3 1370.8 L1871.8 1370.9 L1872.2 1371.0 L1872.7 1371.1 L1873.2 1371.2 L1873.6 1370.9 L1874.1 1370.6 L1874.6 1370.3 L1875.0 1370.1 L1875.5 1370.2 L1876.0 1370.4 L1876.5 1370.5 L1876.9 1370.7 L1877.4 1370.8 L1877.9 1370.9 L1878.3 1371.1 L1878.8 1371.2 L1879.3 1370.8 L1879.8 1370.5 L1880.2 1370.2 L1880.7 1369.8 L1881.2 1370.2 L1881.6 1370.6 L1882.1 1371.0 L1882.6 1371.3 L1883.0 1371.2 L1883.5 1371.0 L1884.0 1370.9 L1884.5 1370.7 L1884.9 1371.0 L1885.4 1371.3 L1885.9 1371.6 L1886.3 1371.9 L1886.8 1371.7 L1887.3 1371.5 L1887.7 1371.3 L1888.2 1371.1 L1888.7 1371.4 L1889.2 1371.8 L1889.6 1372.2 L1890.1 1372.5 L1890.6 1372.4 L1891.0 1372.3 L1891.5 1372.2 L1892.0 1372.0 L1892.5 1371.8 L1892.9 1371.5 L1893.4 1371.3 L1893.9 1371.1 L1894.3 1371.3 L1894.8 1371.5 L1895.3 1371.7 L1895.7 1371.9 L1896.2 1371.8 L1896.7 1371.7 L1897.2 1371.6 L1897.6 1371.5 L1898.1 1371.5 L1898.6 1371.5 L1899.0 1371.6 L1899.5 1371.6 L1900.0 1371.6 L1900.5 1371.5 L1900.9 1371.5 L1901.4 1371.5 L1901.9 1371.4 L1902.3 1371.3 L1902.8 1371.1 L1903.3 1371.0 L1903.7 1371.0 L1904.2 1371.0 L1904.7 1371.0 L1905.2 1371.0 L1905.6 1371.0 L1906.1 1371.0 L1906.6 1371.0 L1907.0 1371.0 L1907.5 1370.6 L1908.0 1370.3 L1908.4 1370.0 L1908.9 1369.7 L1909.4 1370.0 L1909.9 1370.3 L1910.3 1370.6 L1910.8 1370.9 L1911.3 1371.0 L1911.7 1371.1 L1912.2 1371.2 L1912.7 1371.3 L1913.2 1371.2 L1913.6 1371.1 L1914.1 1371.0 L1914.6 1370.9 L1915.0 1371.1 L1915.5 1371.3 L1916.0 1371.4 L1916.4 1371.6 L1916.9 1371.3 L1917.4 1371.0 L1917.9 1370.7 L1918.3 1370.5 L1918.8 1370.8 L1919.3 1371.1 L1919.7 1371.4 L1920.2 1371.7 L1920.7 1371.5 L1921.2 1371.2 L1921.6 1371.0 L1922.1 1370.7 L1922.6 1370.9 L1923.0 1371.1 L1923.5 1371.3 L1924.0 1371.5 L1924.4 1371.3 L1924.9 1371.0 L1925.4 1370.7 L1925.9 1370.5 L1926.3 1370.5 L1926.8 1370.6 L1927.3 1370.7 L1927.7 1370.7 L1928.2 1371.0 L1928.7 1371.2 L1929.2 1371.5 L1929.6 1371.7 L1930.1 1371.7 L1930.6 1371.7 L1931.0 1371.7 L1931.5 1371.7 L1932.0 1371.6 L1932.4 1371.5 L1932.9 1371.4 L1933.4 1371.4 L1933.9 1371.3 L1934.3 1371.2 L1934.8 1371.2 L1935.3 1371.1 L1935.7 1371.0 L1936.2 1370.8 L1936.7 1370.7 L1937.1 1370.5 L1937.6 1370.7 L1938.1 1370.9 L1938.6 1371.1 L1939.0 1371.2 L1939.5 1371.4 L1940.0 1371.6 L1940.4 1371.7 L1940.9 1371.9 L1941.4 1371.6 L1941.9 1371.3 L1942.3 1371.1 L1942.8 1370.8 L1943.3 1371.1 L1943.7 1371.5 L1944.2 1371.8 L1944.7 1372.1 L1945.1 1372.1 L1945.6 1372.1 L1946.1 1372.0 L1946.6 1372.0 L1947.0 1372.0 L1947.5 1371.9 L1948.0 1371.8 L1948.4 1371.8 L1948.9 1371.6 L1949.4 1371.4 L1949.9 1371.3 L1950.3 1371.1 L1950.8 1371.3 L1951.3 1371.6 L1951.7 1371.8 L1952.2 1372.0 L1952.7 1371.9 L1953.1 1371.9 L1953.6 1371.8 L1954.1 1371.7 L1954.6 1371.8 L1955.0 1371.8 L1955.5 1371.9 L1956.0 1371.9 L1956.4 1372.3 L1956.9 1372.6 L1957.4 1373.0 L1957.8 1373.3 L1958.3 1372.9 L1958.8 1372.4 L1959.3 1371.9 L1959.7 1371.4 L1960.2 1371.6 L1960.7 1371.8 L1961.1 1372.0 L1961.6 1372.2 L1962.1 1372.2 L1962.6 1372.3 L1963.0 1372.3 L1963.5 1372.3 L1964.0 1372.2 L1964.4 1372.0 L1964.9 1371.8 L1965.4 1371.6 L1965.8 1371.7 L1966.3 1371.8 L1966.8 1372.0 L1967.3 1372.1 L1967.7 1372.0 L1968.2 1372.0 L1968.7 1372.0 L1969.1 1371.9 L1969.6 1372.1 L1970.1 1372.3 L1970.6 1372.5 L1971.0 1372.7 L1971.5 1372.4 L1972.0 1372.1 L1972.4 1371.9 L1972.9 1371.6 L1973.4 1371.9 L1973.8 1372.2 L1974.3 1372.5 L1974.8 1372.7 L1975.3 1372.9 L1975.7 1373.0 L1976.2 1373.2 L1976.7 1373.3 L1977.1 1373.1 L1977.6 1373.0 L1978.1 1372.8 L1978.6 1372.6 L1979.0 1372.2 L1979.5 1371.8 L1980.0 1371.5 L1980.4 1371.1 L1980.9 1371.0 L1981.4 1370.9 L1981.8 1370.8 L1982.3 1370.7 L1982.8 1370.7 L1983.3 1370.7 L1983.7 1370.6 L1984.2 1370.6 L1984.7 1371.0 L1985.1 1371.4 L1985.6 1371.7 L1986.1 1372.1 L1986.5 1372.1 L1987.0 1372.1 L1987.5 1372.1 L1988.0 1372.1 L1988.4 1372.1 L1988.9 1372.2 L1989.4 1372.2 L1989.8 1372.3 L1990.3 1372.2 L1990.8 1372.1 L1991.3 1372.0 L1991.7 1371.9 L1992.2 1371.8 L1992.7 1371.6 L1993.1 1371.4 L1993.6 1371.3 L1994.1 1371.2 L1994.5 1371.2 L1995.0 1371.1 L1995.5 1371.1 L1996.0 1371.3 L1996.4 1371.5 L1996.9 1371.7 L1997.4 1371.9 L1997.8 1371.7 L1998.3 1371.6 L1998.8 1371.5" stroke="#55a8c8" stroke-width="2.0" fill="none" stroke-linejoin="round"/></g>
<g font-size="28px" text-anchor="middle" clip-path="url(#plotclip)">
<rect x="174.8" y="56.5" width="40.3" height="43.3" fill="#00ff00" fill-opacity="0.76"/>
<text transform="translate(198.1 85.1) scale(0.950 1)" fill="#1a1a1a" stroke="#3dff3d" stroke-width="0.6">O</text>
<rect x="167.1" y="164.8" width="48.3" height="43.7" fill="#00ffff" fill-opacity="0.76"/>
<text transform="translate(194.0 193.6) scale(0.935 1)" fill="#1a1a1a" stroke="#3dffff" stroke-width="0.6">Cr</text>
<rect x="403.1" y="63.3" width="40.2" height="43.4" fill="#ff00ff" fill-opacity="0.76"/>
<text transform="translate(426.7 91.9) scale(0.845 1)" fill="#1a1a1a" stroke="#ff3dff" stroke-width="0.6">Si</text>
<rect x="302.8" y="420.9" width="62.2" height="43.5" fill="#0000ff" fill-opacity="0.76"/>
<text transform="translate(336.9 449.5) scale(1.215 1)" fill="#ffffff" stroke="#3d3dff" stroke-width="0.6">Mg</text>
<rect x="352.8" y="807.3" width="45.0" height="43.5" fill="#00ffff" fill-opacity="0.76"/>
<text transform="translate(379.4 835.9) scale(0.970 1)" fill="#1a1a1a" stroke="#3dffff" stroke-width="0.6">Al</text>
<rect x="204.8" y="1033.7" width="50.2" height="42.7" fill="#ff8000" fill-opacity="0.76"/>
<text transform="translate(232.6 1062.0) scale(0.900 1)" fill="#1a1a1a" stroke="#ff9e3d" stroke-width="0.6">Fe</text>
<rect x="122.8" y="1189.4" width="52.0" height="43.1" fill="#ff0000" fill-opacity="0.76"/>
<text transform="translate(151.5 1217.9) scale(0.990 1)" fill="#1a1a1a" stroke="#ff3d3d" stroke-width="0.6">C*</text>
<rect x="233.0" y="1208.7" width="46.2" height="43.3" fill="#ffff00" fill-opacity="0.76"/>
<text transform="translate(259.1 1237.2) scale(1.000 1)" fill="#1a1a1a" stroke="#ffff3d" stroke-width="0.6">Ni</text>
<rect x="182.9" y="1253.0" width="63.5" height="43.4" fill="#ff00ff" fill-opacity="0.76"/>
<text transform="translate(217.6 1281.6) scale(1.150 1)" fill="#1a1a1a" stroke="#ff3dff" stroke-width="0.6">Mn</text>
<rect x="127.3" y="1269.1" width="52.4" height="42.8" fill="#ffff00" fill-opacity="0.76"/>
<text transform="translate(156.1 1297.4) scale(0.877 1)" fill="#1a1a1a" stroke="#ffff3d" stroke-width="0.6">Ca</text>
<rect x="151.1" y="1312.7" width="41.9" height="43.3" fill="#0000ff" fill-opacity="0.76"/>
<text transform="translate(175.9 1341.2) scale(1.090 1)" fill="#ffffff" stroke="#3d3dff" stroke-width="0.6">Ti</text>
<rect x="765.1" y="1227.1" width="52.6" height="43.5" fill="#ffff00" fill-opacity="0.76"/>
<text transform="translate(794.0 1255.8) scale(0.877 1)" fill="#1a1a1a" stroke="#ffff3d" stroke-width="0.6">Ca</text>
<rect x="924.9" y="1289.2" width="42.2" height="43.1" fill="#0000ff" fill-opacity="0.76"/>
<text transform="translate(949.9 1317.7) scale(1.090 1)" fill="#ffffff" stroke="#3d3dff" stroke-width="0.6">Ti</text>
<rect x="1090.7" y="1301.5" width="48.2" height="43.5" fill="#00ffff" fill-opacity="0.76"/>
<text transform="translate(1117.6 1330.2) scale(0.935 1)" fill="#1a1a1a" stroke="#3dffff" stroke-width="0.6">Cr</text>
<rect x="1174.4" y="1301.5" width="64.8" height="43.5" fill="#ff00ff" fill-opacity="0.76"/>
<text transform="translate(1209.8 1330.2) scale(1.150 1)" fill="#1a1a1a" stroke="#ff3dff" stroke-width="0.6">Mn</text>
<rect x="1277.0" y="887.0" width="50.0" height="43.0" fill="#ff8000" fill-opacity="0.76"/>
<text transform="translate(1304.7 915.4) scale(0.900 1)" fill="#1a1a1a" stroke="#ff9e3d" stroke-width="0.6">Fe</text>
<rect x="1481.0" y="1303.3" width="45.9" height="43.0" fill="#ffff00" fill-opacity="0.76"/>
<text transform="translate(1507.0 1331.7) scale(1.000 1)" fill="#1a1a1a" stroke="#ffff3d" stroke-width="0.6">Ni</text>
</g>
<rect x="1580.5" y="57.8" width="413.7" height="46.6" fill="#ffffff" fill-opacity="0.86"/>
<path d="M1580.5 57V104.6H1995" stroke="#7f7f7f" stroke-width="1.8" fill="none"/>
<path d="M1600.5 74.5H1667.5" stroke="#6aaed6" stroke-width="1.6"/>
<text x="1672" y="81.5" font-size="27.4px" fill="#565656" stroke="#ffffff" stroke-width="0.55" textLength="309" lengthAdjust="spacingAndGlyphs">THMM480-section_bulk</text>
<defs>
<filter id="semtex" x="774" y="62" width="800" height="600" filterUnits="userSpaceOnUse" color-interpolation-filters="sRGB"><feTurbulence type="fractalNoise" baseFrequency="0.34 0.34" numOctaves="2" seed="11" result="n1"/><feColorMatrix in="n1" type="matrix" values="0.9 0 0 0 0.15  0.9 0 0 0 0.15  0.9 0 0 0 0.15  0 0 0 0 1" result="g1"/><feTurbulence type="fractalNoise" baseFrequency="0.018 0.022" numOctaves="2" seed="5" result="n2"/><feColorMatrix in="n2" type="matrix" values="0.5 0 0 0 -0.25  0.5 0 0 0 -0.25  0.5 0 0 0 -0.25  0 0 0 0 1" result="g2"/><feComposite in="g1" in2="g2" operator="arithmetic" k1="0" k2="1" k3="1" k4="0" result="g"/><feComposite in="g" in2="SourceGraphic" operator="in"/></filter>
<filter id="b2" x="-20%" y="-20%" width="140%" height="140%"><feGaussianBlur stdDeviation="2"/></filter>
<filter id="b5" x="-30%" y="-30%" width="160%" height="160%"><feGaussianBlur stdDeviation="5"/></filter>
<filter id="b1" x="-20%" y="-20%" width="140%" height="140%"><feGaussianBlur stdDeviation="0.8"/></filter>
<pattern id="h1" width="4.6" height="4.6" patternUnits="userSpaceOnUse" patternTransform="rotate(38)"><rect x="0" y="0" width="4.6" height="1.5" fill="#ffffff"/></pattern>
<pattern id="h2" width="5.2" height="5.2" patternUnits="userSpaceOnUse" patternTransform="rotate(-52)"><rect x="0" y="0" width="5.2" height="1.4" fill="#ffffff"/></pattern>
<pattern id="h3" width="4.2" height="4.2" patternUnits="userSpaceOnUse" patternTransform="rotate(8)"><rect x="0" y="0" width="4.2" height="1.4" fill="#ffffff"/></pattern>
<pattern id="h4" width="4.2" height="4.2" patternUnits="userSpaceOnUse" patternTransform="rotate(98)"><rect x="0" y="0" width="4.2" height="1.3" fill="#ffffff"/></pattern>
<filter id="rough" x="840" y="70" width="610" height="575" filterUnits="userSpaceOnUse" color-interpolation-filters="sRGB"><feTurbulence type="fractalNoise" baseFrequency="0.07" numOctaves="2" seed="21" result="t"/><feDisplacementMap in="SourceGraphic" in2="t" scale="7" xChannelSelector="R" yChannelSelector="G"/></filter>
<clipPath id="partclip"><path d="M1174.0 85.7 L1213.5 83.7 L1243.0 93.6 L1272.7 105.4 L1302.3 123.2 L1337.9 154.8 L1357.6 180.5 L1373.4 207.0 L1362.0 213.0 L1375.4 227.8 L1391.2 249.6 L1403.0 269.3 L1414.9 298.9 L1424.7 328.5 L1429.7 362.0 L1430.7 381.7 L1420.8 409.4 L1418.8 427.0 L1406.0 462.7 L1397.0 484.4 L1381.3 508.0 L1359.6 531.8 L1332.0 545.6 L1312.2 561.4 L1290.5 583.0 L1262.8 600.9 L1233.2 608.8 L1199.7 620.6 L1174.0 626.6 L1129.4 622.6 L1089.9 612.7 L1070.0 597.0 L1040.5 585.0 L1016.8 571.3 L1001.0 557.5 L981.3 547.6 L951.7 525.9 L930.0 510.0 L912.2 488.4 L896.4 456.8 L880.6 429.0 L868.8 407.4 L862.8 381.7 L857.0 362.0 L855.0 338.4 L856.9 304.8 L858.9 289.0 L868.8 267.3 L876.7 239.7 L896.4 220.0 L912.2 188.4 L924.0 172.6 L951.7 148.9 L979.3 141.0 L997.0 127.0 L1030.7 107.4 L1066.2 95.6 L1080.0 87.7 L1129.4 82.7Z"/></clipPath>
</defs>
<rect x="774" y="62" width="800" height="600" fill="#000000"/>
<g filter="url(#rough)">
<path d="M1174.0 85.7 L1213.5 83.7 L1243.0 93.6 L1272.7 105.4 L1302.3 123.2 L1337.9 154.8 L1357.6 180.5 L1373.4 207.0 L1362.0 213.0 L1375.4 227.8 L1391.2 249.6 L1403.0 269.3 L1414.9 298.9 L1424.7 328.5 L1429.7 362.0 L1430.7 381.7 L1420.8 409.4 L1418.8 427.0 L1406.0 462.7 L1397.0 484.4 L1381.3 508.0 L1359.6 531.8 L1332.0 545.6 L1312.2 561.4 L1290.5 583.0 L1262.8 600.9 L1233.2 608.8 L1199.7 620.6 L1174.0 626.6 L1129.4 622.6 L1089.9 612.7 L1070.0 597.0 L1040.5 585.0 L1016.8 571.3 L1001.0 557.5 L981.3 547.6 L951.7 525.9 L930.0 510.0 L912.2 488.4 L896.4 456.8 L880.6 429.0 L868.8 407.4 L862.8 381.7 L857.0 362.0 L855.0 338.4 L856.9 304.8 L858.9 289.0 L868.8 267.3 L876.7 239.7 L896.4 220.0 L912.2 188.4 L924.0 172.6 L951.7 148.9 L979.3 141.0 L997.0 127.0 L1030.7 107.4 L1066.2 95.6 L1080.0 87.7 L1129.4 82.7Z" fill="#9a9a9a"/>
<path d="M1174.0 85.7 L1213.5 83.7 L1243.0 93.6 L1272.7 105.4 L1302.3 123.2 L1337.9 154.8 L1357.6 180.5 L1373.4 207.0 L1362.0 213.0 L1375.4 227.8 L1391.2 249.6 L1403.0 269.3 L1414.9 298.9 L1424.7 328.5 L1429.7 362.0 L1430.7 381.7 L1420.8 409.4 L1418.8 427.0 L1406.0 462.7 L1397.0 484.4 L1381.3 508.0 L1359.6 531.8 L1332.0 545.6 L1312.2 561.4 L1290.5 583.0 L1262.8 600.9 L1233.2 608.8 L1199.7 620.6 L1174.0 626.6 L1129.4 622.6 L1089.9 612.7 L1070.0 597.0 L1040.5 585.0 L1016.8 571.3 L1001.0 557.5 L981.3 547.6 L951.7 525.9 L930.0 510.0 L912.2 488.4 L896.4 456.8 L880.6 429.0 L868.8 407.4 L862.8 381.7 L857.0 362.0 L855.0 338.4 L856.9 304.8 L858.9 289.0 L868.8 267.3 L876.7 239.7 L896.4 220.0 L912.2 188.4 L924.0 172.6 L951.7 148.9 L979.3 141.0 L997.0 127.0 L1030.7 107.4 L1066.2 95.6 L1080.0 87.7 L1129.4 82.7Z" fill="#ffffff" filter="url(#semtex)"/>
<g clip-path="url(#partclip)">
<path d="M1120 150L1440 150L1440 640L1120 640Z" fill="url(#h1)" fill-opacity="0.20"/>
<path d="M1120 150L1440 150L1440 640L1120 640Z" fill="url(#h2)" fill-opacity="0.16"/>
<path d="M850 130L1120 130L1120 640L850 640Z" fill="url(#h3)" fill-opacity="0.16"/>
<path d="M850 130L1120 130L1120 640L850 640Z" fill="url(#h4)" fill-opacity="0.16"/>
<path d="M983.0 150.0 L1006.0 160.0 L1071.0 175.0 L1129.0 185.0 L1166.0 187.0 L1190.0 171.0 L1240.0 150.0 L1284.0 168.0 L1350.0 186.0 L1362.0 200.0 L1340.0 150.0 L1300.0 118.0 L1243.0 90.0 L1174.0 80.0 L1080.0 84.0 L1030.0 104.0 L995.0 125.0Z" fill="#ffffff" fill-opacity="0.30" filter="url(#b2)"/>
<ellipse cx="1150" cy="548" rx="62" ry="24" fill="#000000" fill-opacity="0.22" filter="url(#b5)"/>
<path d="M884.0 362.0 L896.0 392.0 L912.0 421.0 L928.0 461.0 L934.0 500.0 L915.0 490.0 L897.0 457.0 L881.0 429.0 L869.0 407.0 L860.0 370.0Z" fill="#000000" fill-opacity="0.16" filter="url(#b5)"/>
<path d="M1100.0 230.0 L1150.0 250.0 L1185.0 262.0 L1190.0 300.0 L1150.0 300.0 L1110.0 275.0Z" fill="#000000" fill-opacity="0.15" filter="url(#b5)"/>
<path d="M1040.0 330.0 L1120.0 345.0 L1160.0 380.0 L1120.0 400.0 L1050.0 380.0Z" fill="#000000" fill-opacity="0.07" filter="url(#b5)"/>
<path d="M1019.0 152.0 L1060.0 160.0 L1110.0 168.0 L1160.0 178.0 L1178.0 180.0 L1172.0 188.0 L1149.0 187.0 L1102.0 179.0 L1054.0 171.0 L1019.0 162.0Z" fill="#000000" fill-opacity="0.30" filter="url(#b2)"/>
<path d="M930.0 235.0 L918.0 252.0 L895.0 272.0 L878.0 288.0 L884.0 294.0 L905.0 277.0 L926.0 260.0 L938.0 241.0Z" fill="#000000" fill-opacity="0.24" filter="url(#b2)"/>
<path d="M1351.0 195.0 L1375.0 207.0 L1362.0 214.0 L1341.0 216.0Z" fill="#000000"/>
<path d="M952.0 147.0 L984.0 142.0 L988.0 151.0 L975.0 150.0Z" fill="#000000"/>
<path d="M983.7 148.2 L1000.0 155.0 L1019.2 161.2 L1054.8 169.5 L1102.1 177.8 L1149.5 186.1 L1173.2 186.1 L1196.9 174.2 L1220.6 160.0 L1244.3 150.5" stroke="#0c0c0c" stroke-width="1.8" stroke-opacity="1.00" fill="none" stroke-linecap="round" stroke-linejoin="round" filter="url(#b1)"/>
<path d="M1030.0 164.5 L1054.8 170.5 L1102.1 178.8 L1149.5 187.1 L1168.0 187.1" stroke="#0c0c0c" stroke-width="5.0" stroke-opacity="1.00" fill="none" stroke-linecap="round" stroke-linejoin="round" filter="url(#b1)"/>
<path d="M1099.8 96.0 L1125.8 110.3 L1161.4 124.5 L1208.8 130.4 L1268.0 129.2 L1289.3 123.3" stroke="#0c0c0c" stroke-width="2.0" stroke-opacity="1.00" fill="none" stroke-linecap="round" stroke-linejoin="round" filter="url(#b1)"/>
<path d="M1208.8 131.6 L1244.3 150.5 L1279.8 164.8 L1315.4 174.2 L1350.9 177.8" stroke="#0c0c0c" stroke-width="2.0" stroke-opacity="1.00" fill="none" stroke-linecap="round" stroke-linejoin="round" filter="url(#b1)"/>
<path d="M1277.5 174.2 L1315.4 188.5 L1343.8 197.9 L1362.7 193.2" stroke="#0c0c0c" stroke-width="1.6" stroke-opacity="1.00" fill="none" stroke-linecap="round" stroke-linejoin="round" filter="url(#b1)"/>
<path d="M983.0 149.0 L965.0 178.0 L942.0 220.0 L932.0 240.0 L912.0 262.0 L892.0 280.0 L863.0 307.0" stroke="#0c0c0c" stroke-width="1.6" stroke-opacity="1.00" fill="none" stroke-linecap="round" stroke-linejoin="round" filter="url(#b1)"/>
<path d="M942.0 220.0 L925.0 236.0 L912.0 250.0 L885.0 271.0 L868.0 280.0" stroke="#0c0c0c" stroke-width="1.3" stroke-opacity="0.90" fill="none" stroke-linecap="round" stroke-linejoin="round" filter="url(#b1)"/>
<path d="M863.0 307.0 L870.0 325.0 L873.0 340.0 L877.0 362.0 L885.0 380.0" stroke="#0c0c0c" stroke-width="1.4" stroke-opacity="0.90" fill="none" stroke-linecap="round" stroke-linejoin="round" filter="url(#b1)"/>
<path d="M885.0 362.0 L896.0 392.0 L912.0 421.0 L922.0 445.0 L928.0 461.0 L931.0 480.0 L932.0 500.0" stroke="#0c0c0c" stroke-width="1.4" stroke-opacity="0.90" fill="none" stroke-linecap="round" stroke-linejoin="round" filter="url(#b1)"/>
<path d="M1070.0 589.0 L1100.0 587.0 L1129.0 585.0 L1174.0 584.0 L1213.0 587.0 L1243.0 581.0 L1273.0 582.0" stroke="#0c0c0c" stroke-width="2.1" stroke-opacity="1.00" fill="none" stroke-linecap="round" stroke-linejoin="round" filter="url(#b1)"/>
<path d="M1273.0 582.0 L1277.0 571.0 L1288.0 556.0 L1300.0 540.0 L1313.0 518.0 L1324.0 496.0 L1338.0 480.0 L1355.0 467.0 L1371.0 455.0 L1393.0 433.0" stroke="#0c0c0c" stroke-width="1.8" stroke-opacity="1.00" fill="none" stroke-linecap="round" stroke-linejoin="round" filter="url(#b1)"/>
<path d="M1330.0 530.0 L1348.0 510.0 L1371.0 484.0 L1388.0 470.0 L1401.0 461.0" stroke="#0c0c0c" stroke-width="1.6" stroke-opacity="1.00" fill="none" stroke-linecap="round" stroke-linejoin="round" filter="url(#b1)"/>
<path d="M1419.0 362.0 L1423.0 376.0 L1425.0 388.0 L1421.0 398.0 L1419.0 407.0" stroke="#0c0c0c" stroke-width="1.5" stroke-opacity="0.90" fill="none" stroke-linecap="round" stroke-linejoin="round" filter="url(#b1)"/>
<path d="M1129.0 271.0 L1145.0 274.0 L1160.0 278.0" stroke="#0c0c0c" stroke-width="1.6" stroke-opacity="1.00" fill="none" stroke-linecap="round" stroke-linejoin="round" filter="url(#b1)"/>
<path d="M1020.0 345.0 L1030.0 362.0 L1040.0 378.0 L1052.0 392.0" stroke="#0c0c0c" stroke-width="1.3" stroke-opacity="0.90" fill="none" stroke-linecap="round" stroke-linejoin="round" filter="url(#b1)"/>
<path d="M1060.0 352.0 L1075.0 372.0 L1088.0 384.0" stroke="#0c0c0c" stroke-width="1.1" stroke-opacity="0.60" fill="none" stroke-linecap="round" stroke-linejoin="round" filter="url(#b1)"/>
<path d="M1110.0 338.0 L1135.0 352.0 L1160.0 360.0 L1178.0 352.0" stroke="#0c0c0c" stroke-width="1.0" stroke-opacity="0.60" fill="none" stroke-linecap="round" stroke-linejoin="round" filter="url(#b1)"/>
<path d="M1160.0 418.0 L1178.0 437.0 L1192.0 455.0" stroke="#0c0c0c" stroke-width="1.1" stroke-opacity="0.60" fill="none" stroke-linecap="round" stroke-linejoin="round" filter="url(#b1)"/>
<path d="M1195.0 425.0 L1212.0 440.0" stroke="#0c0c0c" stroke-width="1.0" stroke-opacity="0.60" fill="none" stroke-linecap="round" stroke-linejoin="round" filter="url(#b1)"/>
<path d="M1095.0 470.0 L1108.0 482.0" stroke="#0c0c0c" stroke-width="1.2" stroke-opacity="0.60" fill="none" stroke-linecap="round" stroke-linejoin="round" filter="url(#b1)"/>
<path d="M1152.0 272.0 L1163.0 269.0 L1172.0 273.0 L1171.0 284.0 L1174.0 296.0 L1166.0 292.0 L1158.0 284.0Z" fill="#050505" filter="url(#b1)"/>
<ellipse cx="1020" cy="528" rx="7.0" ry="2.6" transform="rotate(-20 1020 528)" fill="#ededed"/>
<ellipse cx="1035" cy="536" rx="6.0" ry="2.4" transform="rotate(10 1035 536)" fill="#ededed"/>
<ellipse cx="1012" cy="540" rx="5.0" ry="2.2" transform="rotate(-35 1012 540)" fill="#ededed"/>
<ellipse cx="1045" cy="526" rx="5.0" ry="2.0" transform="rotate(30 1045 526)" fill="#ededed"/>
<ellipse cx="1030" cy="548" rx="6.0" ry="2.3" transform="rotate(-10 1030 548)" fill="#ededed"/>
<ellipse cx="1052" cy="540" rx="4.0" ry="2.0" transform="rotate(0 1052 540)" fill="#ededed"/>
<ellipse cx="1004" cy="520" rx="5.0" ry="2.0" transform="rotate(-40 1004 520)" fill="#ededed"/>
</g>
</g>
<ellipse cx="1417.8" cy="255.5" rx="2.6" ry="3.4" fill="#6e6e6e"/>
<path d="M1004.6 194.2 L1085.7 210.6 L1095.9 254.8 L1141.0 300.7 L1182.0 312.2 L1198.3 234.3 L1243.4 189.3 L1358.9 271.2 L1375.7 336.8 L1345.8 420.7 L1238.5 512.9 L1005.8 483.4 L960.7 443.3 L922.6 306.0 L973.0 246.6Z" stroke="#cdd050" stroke-width="0.8" fill="none"/>
<text x="1009" y="185.4" font-size="14.5px" fill="#14c814" textLength="155" lengthAdjust="spacingAndGlyphs">THMM480-section_bulk</text>
<path d="M1408.4 643.3H1549.7M1408.4 634.5V652.2M1549.7 634.5V652.2" stroke="#ffffff" stroke-width="2" fill="none"/>
<text x="1478" y="635.6" font-size="14.5px" font-weight="bold" fill="#ffffff" text-anchor="middle">30 µm</text>
<rect x="241.3" y="1489.8" width="1529.1" height="30.4" fill="#d9d9d9"/>
<rect x="241.3" y="1489.8" width="1529.1" height="61.6" fill="none" stroke="#000000" stroke-width="1.2"/>
<path d="M241.3 1520.2H1770.4" stroke="#000000" stroke-width="1.2"/>
<g font-size="21.5px" fill="#000000">
<text x="287.9" y="1513" textLength="40.5" lengthAdjust="spacingAndGlyphs">MM</text>
<text x="379.9" y="1513" textLength="154" lengthAdjust="spacingAndGlyphs">Spectrum name</text>
<text x="257.5" y="1544.5" textLength="104" lengthAdjust="spacingAndGlyphs">THMM480</text>
<text x="379.9" y="1544.5" textLength="237" lengthAdjust="spacingAndGlyphs">THMM480-section_bulk</text>
<text x="758.6" y="1513" text-anchor="middle">C</text>
<text x="764.9" y="1544.5" text-anchor="end">0</text>
<text x="807.6" y="1513" text-anchor="middle">O</text>
<text x="834.4" y="1544.5" text-anchor="end">25,07</text>
<text x="868.4" y="1513" text-anchor="middle">Na</text>
<text x="930.0" y="1513" text-anchor="middle">Mg</text>
<text x="950.5" y="1544.5" text-anchor="end">9,49</text>
<text x="990.4" y="1513" text-anchor="middle">Al</text>
<text x="1011.7" y="1544.5" text-anchor="end">4,99</text>
<text x="1051.7" y="1513" text-anchor="middle">Si</text>
<text x="1079.0" y="1544.5" text-anchor="end">12,86</text>
<text x="1112.9" y="1513" text-anchor="middle">P</text>
<text x="1174.1" y="1513" text-anchor="middle">S</text>
<text x="1234.9" y="1513" text-anchor="middle">Cl</text>
<text x="1296.2" y="1513" text-anchor="middle">K</text>
<text x="1357.0" y="1513" text-anchor="middle">Ca</text>
<text x="1377.9" y="1544.5" text-anchor="end">1,59</text>
<text x="1417.4" y="1513" text-anchor="middle">Ti</text>
<text x="1438.7" y="1544.5" text-anchor="end">0,38</text>
<text x="1479.4" y="1513" text-anchor="middle">Cr</text>
<text x="1499.5" y="1544.5" text-anchor="end">0,17</text>
<text x="1539.8" y="1513" text-anchor="middle">Mn</text>
<text x="1560.7" y="1544.5" text-anchor="end">0,18</text>
<text x="1601.4" y="1513" text-anchor="middle">Fe</text>
<text x="1627.4" y="1544.5" text-anchor="end">35,25</text>
<text x="1661.8" y="1513" text-anchor="middle">Ni</text>
<text x="1682.3" y="1544.5" text-anchor="end">0,92</text>
<text x="1731.3" y="1513" text-anchor="middle">Sum</text>
<text x="1766.8" y="1544.5" text-anchor="end">90,89</text>
</g>
</svg></body></html>
